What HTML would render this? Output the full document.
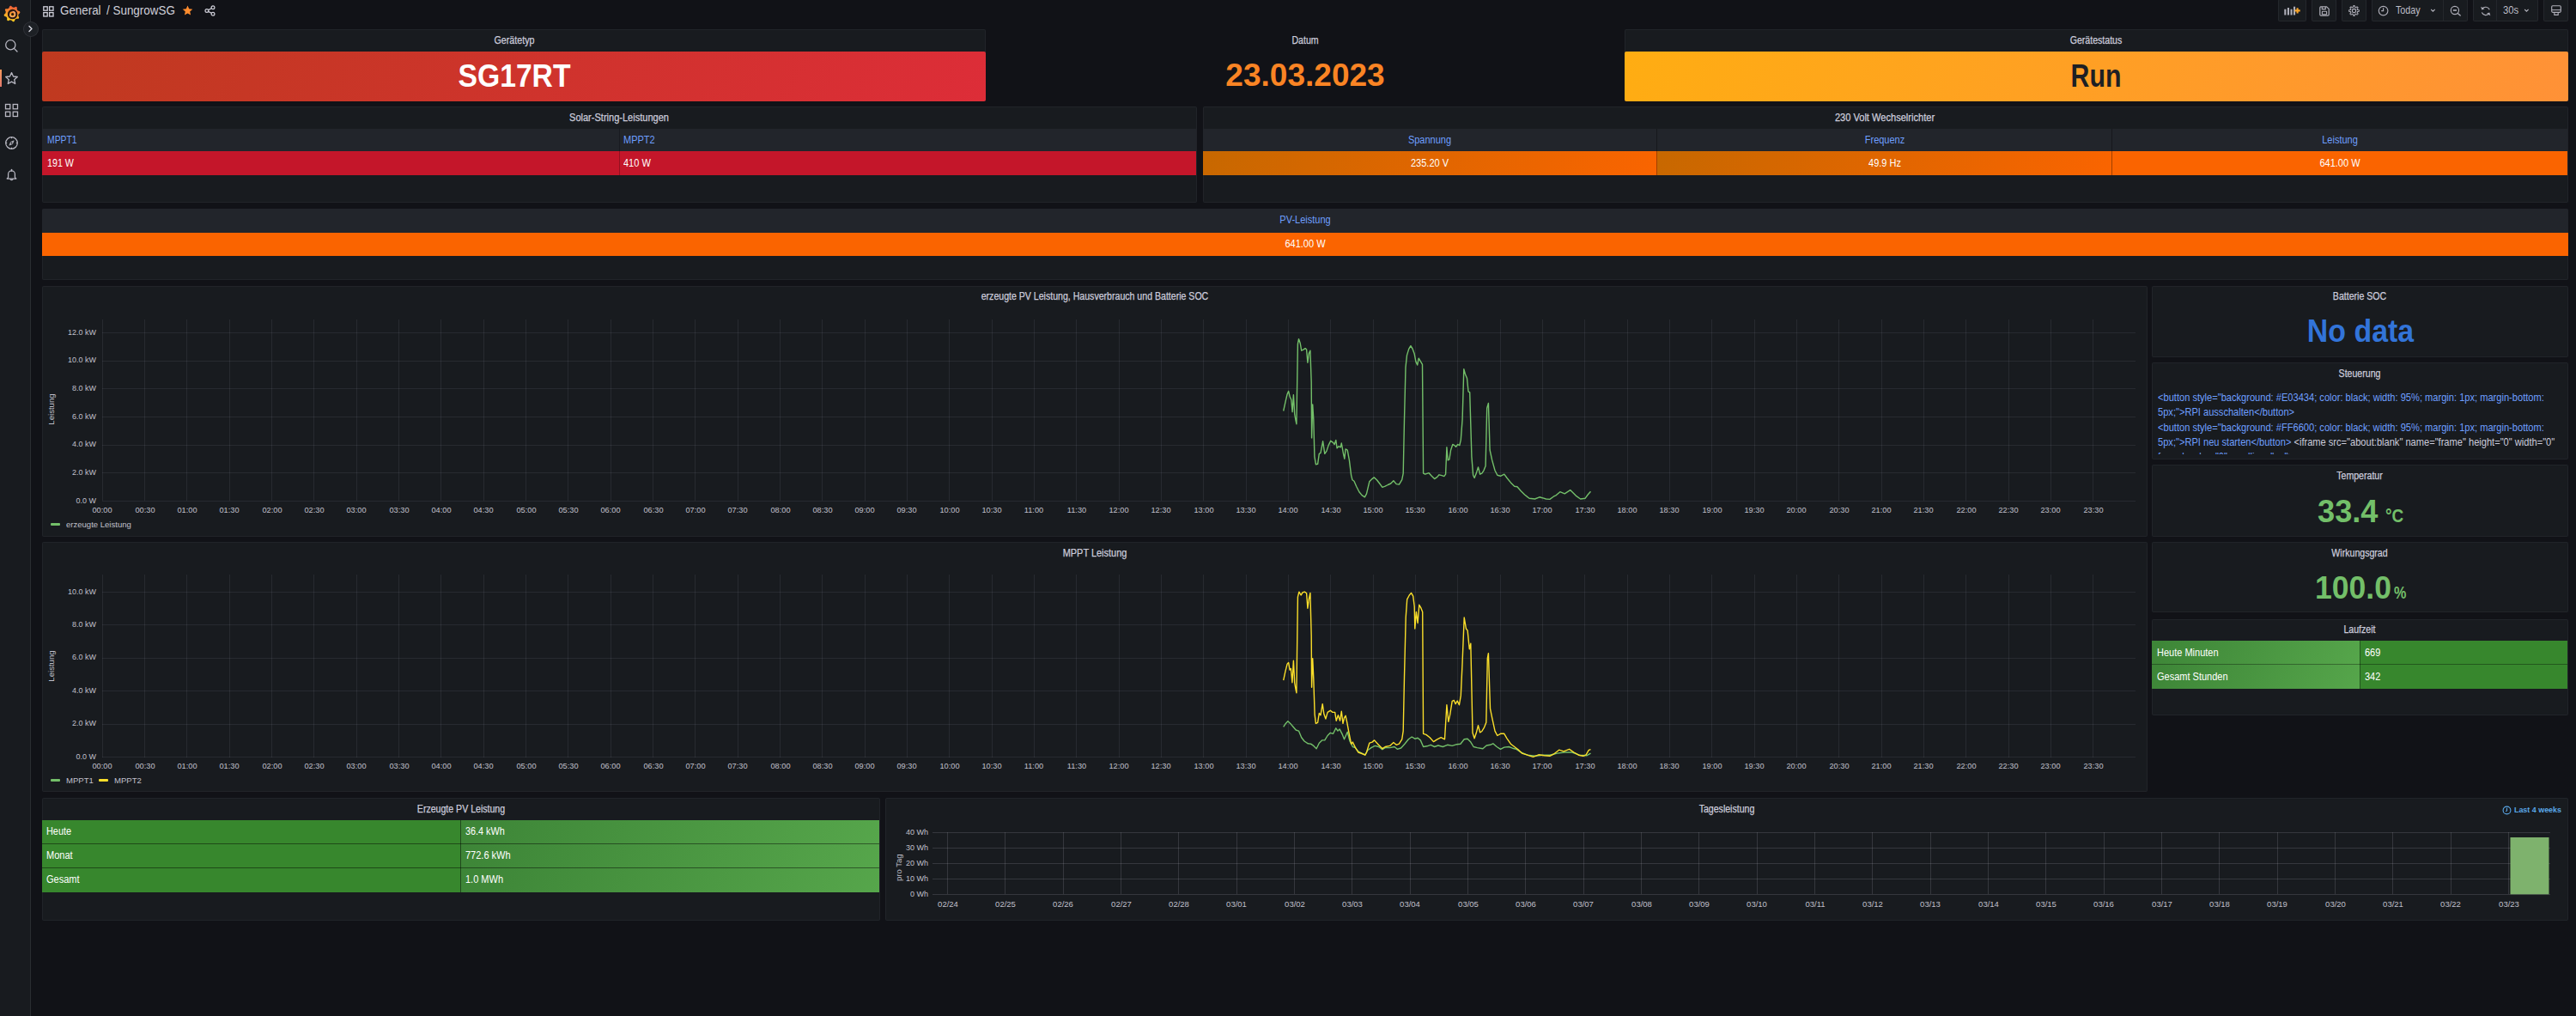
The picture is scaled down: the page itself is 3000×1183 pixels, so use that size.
<!DOCTYPE html><html><head><meta charset="utf-8"><style>
*{margin:0;padding:0;}
html,body{width:3000px;height:1183px;overflow:hidden;background:#111217;font-family:"Liberation Sans", sans-serif;}
svg{position:absolute;overflow:visible;}
</style></head><body><div style="position:absolute;left:0.00px;top:0.00px;width:35.00px;height:1183.00px;background:#181b1f;border-right:1px solid rgba(204,204,220,0.10);"></div>
<svg style="left:3.5px;top:5.5px" width="20" height="20" viewBox="0 0 20 20">
<defs><linearGradient id="lg" x1="0.3" y1="1" x2="0.5" y2="0"><stop offset="0" stop-color="#fcd21f"/><stop offset="0.45" stop-color="#f9a52a"/><stop offset="1" stop-color="#f05a3a"/></linearGradient></defs>
<path fill="url(#lg)" d="M18.26 10.00 L17.63 10.50 L17.49 10.99 L17.40 11.47 L17.29 11.95 L17.30 12.48 L17.70 13.19 L18.03 13.96 L18.14 14.70 L17.94 15.31 L17.43 15.70 L16.69 15.86 L15.84 15.84 L15.04 15.75 L14.60 15.99 L14.19 16.28 L13.78 16.54 L13.41 16.91 L13.19 17.70 L12.88 18.48 L12.43 19.08 L11.86 19.37 L11.22 19.28 L10.58 18.87 L10.00 18.26 L9.50 17.63 L9.01 17.49 L8.53 17.40 L8.05 17.29 L7.52 17.30 L6.81 17.70 L6.04 18.03 L5.30 18.14 L4.69 17.94 L4.30 17.43 L4.14 16.69 L4.16 15.84 L4.25 15.04 L4.01 14.60 L3.72 14.19 L3.46 13.78 L3.09 13.41 L2.30 13.19 L1.52 12.88 L0.92 12.43 L0.63 11.86 L0.72 11.22 L1.13 10.58 L1.74 10.00 L2.37 9.50 L2.51 9.01 L2.60 8.53 L2.71 8.05 L2.70 7.52 L2.30 6.81 L1.97 6.04 L1.86 5.30 L2.06 4.69 L2.57 4.30 L3.31 4.14 L4.16 4.16 L4.96 4.25 L5.40 4.01 L5.81 3.72 L6.22 3.46 L6.59 3.09 L6.81 2.30 L7.12 1.52 L7.57 0.92 L8.14 0.63 L8.78 0.72 L9.42 1.13 L10.00 1.74 L10.50 2.37 L10.99 2.51 L11.47 2.60 L11.95 2.71 L12.48 2.70 L13.19 2.30 L13.96 1.97 L14.70 1.86 L15.31 2.06 L15.70 2.57 L15.86 3.31 L15.84 4.16 L15.75 4.96 L15.99 5.40 L16.28 5.81 L16.54 6.22 L16.91 6.59 L17.70 6.81 L18.48 7.12 L19.08 7.57 L19.37 8.14 L19.28 8.78 L18.87 9.42Z"/>
<circle cx="10.6" cy="10.6" r="4.6" fill="none" stroke="#2a1710" stroke-width="2.3"/>
<path d="M10.6 7.4 A3.2 3.2 0 1 1 7.4 10.8" fill="none" stroke="#e8a27a" stroke-width="1.1"/>
<circle cx="10.6" cy="10.6" r="1.6" fill="#2a1710"/>
</svg>
<div style="position:absolute;left:26.5px;top:24.5px;width:18px;height:18px;border-radius:50%;background:#1d2025;border:1px solid rgba(204,204,220,0.10);box-sizing:border-box;"></div>
<svg style="left:31px;top:29px" width="9" height="9" viewBox="0 0 9 9"><path d="M3 1.5 L6 4.5 L3 7.5" fill="none" stroke="#d8d8e0" stroke-width="1.4" stroke-linecap="round" stroke-linejoin="round"/></svg>
<svg style="left:5px;top:45px" width="17" height="17" viewBox="0 0 17 17"><circle cx="7.3" cy="7.3" r="5.6" fill="none" stroke="#b8b8c2" stroke-width="1.3"/><path d="M11.4 11.4 L15 15" stroke="#b8b8c2" stroke-width="1.3" stroke-linecap="round"/></svg>
<svg style="left:5px;top:83px" width="17" height="17" viewBox="0 0 17 17"><path d="M8.5 1.6 L10.5 6 L15.3 6.5 L11.7 9.7 L12.7 14.5 L8.5 12.1 L4.3 14.5 L5.3 9.7 L1.7 6.5 L6.5 6 Z" fill="none" stroke="#b8b8c2" stroke-width="1.3" stroke-linejoin="round"/></svg>
<div style="position:absolute;left:0;top:80.5px;width:1.6px;height:20px;background:linear-gradient(#f79a5c,#e2786c);"></div>
<svg style="left:5px;top:120px" width="17" height="17" viewBox="0 0 17 17"><g fill="none" stroke="#b8b8c2" stroke-width="1.3"><rect x="1.5" y="1.5" width="5.3" height="5.3"/><rect x="10.2" y="1.5" width="5.3" height="5.3"/><rect x="1.5" y="10.2" width="5.3" height="5.3"/><rect x="10.2" y="10.2" width="5.3" height="5.3"/></g></svg>
<svg style="left:5px;top:157.5px" width="17" height="17" viewBox="0 0 17 17"><circle cx="8.5" cy="8.5" r="6.8" fill="none" stroke="#b8b8c2" stroke-width="1.25"/><path d="M8.5 1.7 V3.2 M8.5 13.8 V15.3 M1.7 8.5 H3.2 M13.8 8.5 H15.3" stroke="#b8b8c2" stroke-width="1.1"/><path d="M11.2 5.8 L9.6 9.6 L5.8 11.2 L7.4 7.4 Z" fill="#b8b8c2" stroke="#b8b8c2" stroke-width="0.6" stroke-linejoin="round"/><circle cx="8.5" cy="8.5" r="0.9" fill="#181b1f"/></svg>
<svg style="left:5px;top:195px" width="17" height="17" viewBox="0 0 17 17"><path d="M4.6 11.6 V7.8 A3.9 3.9 0 0 1 12.4 7.8 V11.6 L13.8 13 H3.2 Z" fill="none" stroke="#b8b8c2" stroke-width="1.25" stroke-linejoin="round"/><path d="M7 13.2 A1.5 1.5 0 0 0 10 13.2" fill="none" stroke="#b8b8c2" stroke-width="1.2"/><path d="M8.5 2.3 V3.9" stroke="#b8b8c2" stroke-width="1.25" stroke-linecap="round"/></svg>
<svg style="left:49.5px;top:6.5px" width="13" height="13" viewBox="0 0 13 13"><g fill="none" stroke="#d0d0da" stroke-width="1.3"><rect x="0.8" y="0.8" width="4.4" height="4.4"/><rect x="7.6" y="0.8" width="4.4" height="4.4"/><rect x="0.8" y="7.6" width="4.4" height="4.4"/><rect x="7.6" y="7.6" width="4.4" height="4.4"/></g></svg>
<div style="position:absolute;left:69.70px;top:-1.48px;width:1600px;height:27.6px;line-height:27.6px;text-align:left;font-size:13.8px;color:#d0d0da;font-weight:normal;white-space:nowrap;transform:scaleX(0.9696);transform-origin:left center;">General</div>
<div style="position:absolute;left:124.10px;top:-1.48px;width:1600px;height:27.6px;line-height:27.6px;text-align:left;font-size:13.8px;color:#d0d0da;font-weight:normal;white-space:nowrap;transform:scaleX(0.9735);transform-origin:left center;">/ SungrowSG</div>
<svg style="left:211.5px;top:5.8px" width="13" height="13" viewBox="0 0 13 13"><path d="M6.5 0.6 L8.2 4.3 L12.3 4.7 L9.2 7.4 L10.1 11.5 L6.5 9.4 L2.9 11.5 L3.8 7.4 L0.7 4.7 L4.8 4.3 Z" fill="#ff8c2e"/></svg>
<svg style="left:238px;top:6px" width="13" height="13" viewBox="0 0 13 13"><g fill="none" stroke="#d0d0da" stroke-width="1.2"><circle cx="10" cy="2.8" r="1.9"/><circle cx="2.9" cy="6.5" r="1.9"/><circle cx="10" cy="10.2" r="1.9"/><path d="M4.6 5.6 L8.3 3.7 M4.6 7.4 L8.3 9.3"/></g></svg>
<div style="position:absolute;left:2653.00px;top:-1.00px;width:33.00px;height:25.50px;background:#181b1f;border:1px solid rgba(204,204,220,0.07);box-sizing:border-box;border-radius:2px;"></div>
<div style="position:absolute;left:2692.00px;top:-1.00px;width:29.00px;height:25.50px;background:#181b1f;border:1px solid rgba(204,204,220,0.07);box-sizing:border-box;border-radius:2px;"></div>
<div style="position:absolute;left:2727.00px;top:-1.00px;width:28.50px;height:25.50px;background:#181b1f;border:1px solid rgba(204,204,220,0.07);box-sizing:border-box;border-radius:2px;"></div>
<div style="position:absolute;left:2761.50px;top:-1.00px;width:112.00px;height:25.50px;background:#181b1f;border:1px solid rgba(204,204,220,0.07);box-sizing:border-box;border-radius:2px;"></div>
<div style="position:absolute;left:2845.00px;top:0.00px;width:1.00px;height:24.00px;background:rgba(204,204,220,0.07);"></div>
<div style="position:absolute;left:2880.00px;top:-1.00px;width:75.50px;height:25.50px;background:#181b1f;border:1px solid rgba(204,204,220,0.07);box-sizing:border-box;border-radius:2px;"></div>
<div style="position:absolute;left:2907.00px;top:0.00px;width:1.00px;height:24.00px;background:rgba(204,204,220,0.07);"></div>
<div style="position:absolute;left:2962.00px;top:-1.00px;width:28.50px;height:25.50px;background:#181b1f;border:1px solid rgba(204,204,220,0.07);box-sizing:border-box;border-radius:2px;"></div>
<svg style="left:2659px;top:5px" width="22" height="15" viewBox="0 0 22 15"><g fill="#aeaeb8"><rect x="1.3" y="5.7" width="2.1" height="6.8"/><rect x="4.9" y="4" width="2.1" height="8.5"/><rect x="8.5" y="5.7" width="2.1" height="6.8"/><rect x="12" y="2.7" width="2.1" height="9.8"/></g><path d="M16.6 4.3 V10.5 M13.5 7.4 H19.7" stroke="#f7a52b" stroke-width="2.1"/></svg>
<svg style="left:2700.5px;top:6.5px" width="12" height="12" viewBox="0 0 12 12"><path d="M1.5 0.8 H8.6 L11.2 3.4 V10 Q11.2 11.2 10 11.2 H1.9 Q0.8 11.2 0.8 10 V1.9 Q0.8 0.8 1.9 0.8 Z" fill="none" stroke="#aeaeb8" stroke-width="1.2" stroke-linejoin="round"/><path d="M3.3 1 V3.6 H7.3 V1" fill="none" stroke="#aeaeb8" stroke-width="1.1"/><rect x="3.4" y="6.3" width="5.2" height="3.6" rx="0.6" fill="none" stroke="#aeaeb8" stroke-width="1.1"/></svg>
<svg style="left:2734.7px;top:6.1px" width="13" height="13" viewBox="0 0 13 13"><path d="M10.33 8.09 L10.22 8.34 L10.17 8.62 L10.66 9.28 L11.07 10.01 L10.90 10.36 L10.64 10.64 L10.36 10.90 L10.01 11.07 L9.28 10.66 L8.62 10.17 L8.34 10.22 L8.09 10.33 L7.83 10.43 L7.60 10.59 L7.48 11.40 L7.25 12.22 L6.88 12.34 L6.50 12.35 L6.12 12.34 L5.75 12.22 L5.52 11.40 L5.40 10.59 L5.17 10.43 L4.91 10.33 L4.66 10.22 L4.38 10.17 L3.72 10.66 L2.99 11.07 L2.64 10.90 L2.36 10.64 L2.10 10.36 L1.93 10.01 L2.34 9.28 L2.83 8.62 L2.78 8.34 L2.67 8.09 L2.57 7.83 L2.41 7.60 L1.60 7.48 L0.78 7.25 L0.66 6.88 L0.65 6.50 L0.66 6.12 L0.78 5.75 L1.60 5.52 L2.41 5.40 L2.57 5.17 L2.67 4.91 L2.78 4.66 L2.83 4.38 L2.34 3.72 L1.93 2.99 L2.10 2.64 L2.36 2.36 L2.64 2.10 L2.99 1.93 L3.72 2.34 L4.38 2.83 L4.66 2.78 L4.91 2.67 L5.17 2.57 L5.40 2.41 L5.52 1.60 L5.75 0.78 L6.12 0.66 L6.50 0.65 L6.88 0.66 L7.25 0.78 L7.48 1.60 L7.60 2.41 L7.83 2.57 L8.09 2.67 L8.34 2.78 L8.62 2.83 L9.28 2.34 L10.01 1.93 L10.36 2.10 L10.64 2.36 L10.90 2.64 L11.07 2.99 L10.66 3.72 L10.17 4.38 L10.22 4.66 L10.33 4.91 L10.43 5.17 L10.59 5.40 L11.40 5.52 L12.22 5.75 L12.34 6.12 L12.35 6.50 L12.34 6.88 L12.22 7.25 L11.40 7.48 L10.59 7.60 L10.43 7.83Z" fill="none" stroke="#aeaeb8" stroke-width="1.1" stroke-linejoin="round"/><circle cx="6.5" cy="6.5" r="2.1" fill="none" stroke="#aeaeb8" stroke-width="1.1"/></svg>
<svg style="left:2769px;top:6px" width="13" height="13" viewBox="0 0 13 13"><circle cx="6.6" cy="6.6" r="5.3" fill="none" stroke="#aeaeb8" stroke-width="1.15"/><path d="M6.6 3.3 V6.6 H4.2" fill="none" stroke="#aeaeb8" stroke-width="1.15"/></svg>
<div style="position:absolute;left:2790.20px;top:0.37px;width:1600px;height:24.4px;line-height:24.4px;text-align:left;font-size:12.2px;color:#bdbdc7;font-weight:normal;white-space:nowrap;transform:scaleX(0.8819);transform-origin:left center;">Today</div>
<svg style="left:2829.6px;top:10.4px" width="7" height="5" viewBox="0 0 7 5"><path d="M1.2 1 L3.4 3.2 L5.6 1" fill="none" stroke="#aeaeb8" stroke-width="1.1"/></svg>
<svg style="left:2852.5px;top:5.8px" width="14" height="14" viewBox="0 0 14 14"><circle cx="5.9" cy="6" r="4.6" fill="none" stroke="#aeaeb8" stroke-width="1.15"/><path d="M9.3 9.4 L12.2 12.1" stroke="#aeaeb8" stroke-width="1.3" stroke-linecap="round"/><path d="M3.8 6 H8" stroke="#aeaeb8" stroke-width="1.6"/></svg>
<svg style="left:2887.5px;top:6px" width="14" height="14" viewBox="0 0 14 14"><path d="M2.6 4.4 A5 5 0 0 1 11.3 5.2 M11 9.4 A5 5 0 0 1 2.3 8.6" fill="none" stroke="#aeaeb8" stroke-width="1.15"/><path d="M1.2 1.8 L2.4 5.4 L5.6 4.2 Z M12.4 12.2 L11.2 8.6 L8 9.8 Z" fill="#aeaeb8"/></svg>
<div style="position:absolute;left:2914.60px;top:0.37px;width:1600px;height:24.4px;line-height:24.4px;text-align:left;font-size:12.2px;color:#bdbdc7;font-weight:normal;white-space:nowrap;transform:scaleX(0.9251);transform-origin:left center;">30s</div>
<svg style="left:2939.3px;top:10.4px" width="7" height="5" viewBox="0 0 7 5"><path d="M1.2 1 L3.4 3.2 L5.6 1" fill="none" stroke="#aeaeb8" stroke-width="1.1"/></svg>
<svg style="left:2970.6px;top:6.3px" width="13" height="13" viewBox="0 0 13 13"><rect x="0.7" y="0.7" width="10.6" height="7.6" rx="1.2" fill="none" stroke="#aeaeb8" stroke-width="1.15"/><path d="M1 5.6 H11" stroke="#aeaeb8" stroke-width="1"/><path d="M3.8 8.3 V11.4 H8.2 V8.3" fill="none" stroke="#aeaeb8" stroke-width="1.1"/></svg>
<div style="position:absolute;left:49.00px;top:34.00px;width:1099.00px;height:83.50px;background:#181b1f;border:1px solid rgba(204,204,220,0.055);box-sizing:border-box;border-radius:2px;"></div>
<div style="position:absolute;left:-201.50px;top:34.64px;width:1600px;height:24.6px;line-height:24.6px;text-align:center;font-size:12.3px;color:#ccccdc;font-weight:normal;white-space:nowrap;transform:scaleX(0.8681);transform-origin:center center;-webkit-text-stroke:0.25px #ccccdc;">Ger&auml;tetyp</div>
<div style="position:absolute;left:49.00px;top:60.00px;width:1099.00px;height:57.50px;background:linear-gradient(120deg,#bf3a1f,#dd2d38);border-radius:2px;"></div>
<div style="position:absolute;left:-201.45px;top:50.88px;width:1600px;height:74.6px;line-height:74.6px;text-align:center;font-size:37.3px;color:#ffffff;font-weight:bold;white-space:nowrap;transform:scaleX(0.9035);transform-origin:center center;">SG17RT</div>
<div style="position:absolute;left:719.90px;top:34.64px;width:1600px;height:24.6px;line-height:24.6px;text-align:center;font-size:12.3px;color:#ccccdc;font-weight:normal;white-space:nowrap;transform:scaleX(0.8600);transform-origin:center center;-webkit-text-stroke:0.25px #ccccdc;">Datum</div>
<div style="position:absolute;left:719.75px;top:51.86px;width:1600px;height:72.4px;line-height:72.4px;text-align:center;font-size:36.2px;color:#fa8424;font-weight:bold;white-space:nowrap;transform:scaleX(1.0238);transform-origin:center center;">23.03.2023</div>
<div style="position:absolute;left:1891.50px;top:34.00px;width:1099.00px;height:83.50px;background:#181b1f;border:1px solid rgba(204,204,220,0.055);box-sizing:border-box;border-radius:2px;"></div>
<div style="position:absolute;left:1640.70px;top:34.64px;width:1600px;height:24.6px;line-height:24.6px;text-align:center;font-size:12.3px;color:#ccccdc;font-weight:normal;white-space:nowrap;transform:scaleX(0.8600);transform-origin:center center;-webkit-text-stroke:0.25px #ccccdc;">Ger&auml;testatus</div>
<div style="position:absolute;left:1891.50px;top:60.00px;width:1099.00px;height:57.50px;background:linear-gradient(120deg,#ffad12,#ff9137);border-radius:2px;"></div>
<div style="position:absolute;left:1640.95px;top:50.69px;width:1600px;height:74.2px;line-height:74.2px;text-align:center;font-size:37.1px;color:#1d2024;font-weight:bold;white-space:nowrap;transform:scaleX(0.8162);transform-origin:center center;">Run</div>
<div style="position:absolute;left:49.00px;top:124.00px;width:1344.50px;height:112.00px;background:#181b1f;border:1px solid rgba(204,204,220,0.055);box-sizing:border-box;border-radius:2px;"></div>
<div style="position:absolute;left:-78.80px;top:124.64px;width:1600px;height:24.6px;line-height:24.6px;text-align:center;font-size:12.3px;color:#ccccdc;font-weight:normal;white-space:nowrap;transform:scaleX(0.8970);transform-origin:center center;-webkit-text-stroke:0.25px #ccccdc;">Solar-String-Leistungen</div>
<div style="position:absolute;left:49.00px;top:150.00px;width:1343.50px;height:26.00px;background:#22252b;"></div>
<div style="position:absolute;left:49.00px;top:176.00px;width:1343.50px;height:27.50px;background:#c4162a;"></div>
<div style="position:absolute;left:720.50px;top:150.00px;width:1.00px;height:53.50px;background:rgba(0,0,0,0.25);"></div>
<div style="position:absolute;left:54.70px;top:151.04px;width:1600px;height:24.6px;line-height:24.6px;text-align:left;font-size:12.3px;color:#6e9fff;font-weight:normal;white-space:nowrap;transform:scaleX(0.8435);transform-origin:left center;">MPPT1</div>
<div style="position:absolute;left:726.20px;top:151.04px;width:1600px;height:24.6px;line-height:24.6px;text-align:left;font-size:12.3px;color:#6e9fff;font-weight:normal;white-space:nowrap;transform:scaleX(0.8950);transform-origin:left center;">MPPT2</div>
<div style="position:absolute;left:54.70px;top:178.04px;width:1600px;height:24.6px;line-height:24.6px;text-align:left;font-size:12.3px;color:#ffffff;font-weight:normal;white-space:nowrap;transform:scaleX(0.8693);transform-origin:left center;">191 W</div>
<div style="position:absolute;left:726.20px;top:178.04px;width:1600px;height:24.6px;line-height:24.6px;text-align:left;font-size:12.3px;color:#ffffff;font-weight:normal;white-space:nowrap;transform:scaleX(0.8950);transform-origin:left center;">410 W</div>
<div style="position:absolute;left:1400.50px;top:124.00px;width:1590.00px;height:112.00px;background:#181b1f;border:1px solid rgba(204,204,220,0.055);box-sizing:border-box;border-radius:2px;"></div>
<div style="position:absolute;left:1395.20px;top:124.64px;width:1600px;height:24.6px;line-height:24.6px;text-align:center;font-size:12.3px;color:#ccccdc;font-weight:normal;white-space:nowrap;transform:scaleX(0.9008);transform-origin:center center;-webkit-text-stroke:0.25px #ccccdc;">230 Volt Wechselrichter</div>
<div style="position:absolute;left:1400.50px;top:150.00px;width:1589.00px;height:26.00px;background:#22252b;"></div>
<div style="position:absolute;left:1400.50px;top:176.00px;width:529.00px;height:27.50px;background:linear-gradient(120deg,#c76800,#fa6400);"></div>
<div style="position:absolute;left:865.00px;top:151.04px;width:1600px;height:24.6px;line-height:24.6px;text-align:center;font-size:12.3px;color:#6e9fff;font-weight:normal;white-space:nowrap;transform:scaleX(0.8950);transform-origin:center center;">Spannung</div>
<div style="position:absolute;left:865.00px;top:178.04px;width:1600px;height:24.6px;line-height:24.6px;text-align:center;font-size:12.3px;color:#ffffff;font-weight:normal;white-space:nowrap;transform:scaleX(0.8950);transform-origin:center center;">235.20 V</div>
<div style="position:absolute;left:1929.50px;top:176.00px;width:530.00px;height:27.50px;background:linear-gradient(120deg,#c76800,#fa6400);"></div>
<div style="position:absolute;left:1394.50px;top:151.04px;width:1600px;height:24.6px;line-height:24.6px;text-align:center;font-size:12.3px;color:#6e9fff;font-weight:normal;white-space:nowrap;transform:scaleX(0.8950);transform-origin:center center;">Frequenz</div>
<div style="position:absolute;left:1394.50px;top:178.04px;width:1600px;height:24.6px;line-height:24.6px;text-align:center;font-size:12.3px;color:#ffffff;font-weight:normal;white-space:nowrap;transform:scaleX(0.8950);transform-origin:center center;">49.9 Hz</div>
<div style="position:absolute;left:2459.50px;top:176.00px;width:530.00px;height:27.50px;background:#fa6400;"></div>
<div style="position:absolute;left:1924.50px;top:151.04px;width:1600px;height:24.6px;line-height:24.6px;text-align:center;font-size:12.3px;color:#6e9fff;font-weight:normal;white-space:nowrap;transform:scaleX(0.8950);transform-origin:center center;">Leistung</div>
<div style="position:absolute;left:1924.50px;top:178.04px;width:1600px;height:24.6px;line-height:24.6px;text-align:center;font-size:12.3px;color:#ffffff;font-weight:normal;white-space:nowrap;transform:scaleX(0.8950);transform-origin:center center;">641.00 W</div>
<div style="position:absolute;left:1929.00px;top:150.00px;width:1.00px;height:53.50px;background:rgba(0,0,0,0.35);"></div>
<div style="position:absolute;left:2459.00px;top:150.00px;width:1.00px;height:53.50px;background:rgba(0,0,0,0.35);"></div>
<div style="position:absolute;left:49.00px;top:243.00px;width:2941.50px;height:83.00px;background:#181b1f;border:1px solid rgba(204,204,220,0.055);box-sizing:border-box;border-radius:2px;"></div>
<div style="position:absolute;left:49.00px;top:243.00px;width:2941.50px;height:27.50px;background:#22252b;border-radius:2px 2px 0 0;"></div>
<div style="position:absolute;left:49.00px;top:270.50px;width:2941.50px;height:27.50px;background:#fa6400;"></div>
<div style="position:absolute;left:719.50px;top:244.04px;width:1600px;height:24.6px;line-height:24.6px;text-align:center;font-size:12.3px;color:#6e9fff;font-weight:normal;white-space:nowrap;transform:scaleX(0.8950);transform-origin:center center;">PV-Leistung</div>
<div style="position:absolute;left:719.50px;top:272.34px;width:1600px;height:24.6px;line-height:24.6px;text-align:center;font-size:12.3px;color:#ffffff;font-weight:normal;white-space:nowrap;transform:scaleX(0.8950);transform-origin:center center;">641.00 W</div>
<div style="position:absolute;left:49.00px;top:332.50px;width:2451.50px;height:292.50px;background:#181b1f;border:1px solid rgba(204,204,220,0.055);box-sizing:border-box;border-radius:2px;"></div><div style="position:absolute;left:474.50px;top:333.14px;width:1600px;height:24.6px;line-height:24.6px;text-align:center;font-size:12.3px;color:#ccccdc;font-weight:normal;white-space:nowrap;transform:scaleX(0.8600);transform-origin:center center;-webkit-text-stroke:0.25px #ccccdc;">erzeugte PV Leistung, Hausverbrauch und Batterie SOC</div><svg style="left:0;top:0" width="3000" height="1183" viewBox="0 0 3000 1183"><g stroke="rgba(204,204,220,0.09)" stroke-width="1" shape-rendering="crispEdges"><line x1="119.25" y1="372" x2="119.25" y2="583.4"/><line x1="168.58" y1="372" x2="168.58" y2="583.4"/><line x1="217.91" y1="372" x2="217.91" y2="583.4"/><line x1="267.23" y1="372" x2="267.23" y2="583.4"/><line x1="316.56" y1="372" x2="316.56" y2="583.4"/><line x1="365.89" y1="372" x2="365.89" y2="583.4"/><line x1="415.22" y1="372" x2="415.22" y2="583.4"/><line x1="464.55" y1="372" x2="464.55" y2="583.4"/><line x1="513.88" y1="372" x2="513.88" y2="583.4"/><line x1="563.20" y1="372" x2="563.20" y2="583.4"/><line x1="612.53" y1="372" x2="612.53" y2="583.4"/><line x1="661.86" y1="372" x2="661.86" y2="583.4"/><line x1="711.19" y1="372" x2="711.19" y2="583.4"/><line x1="760.52" y1="372" x2="760.52" y2="583.4"/><line x1="809.84" y1="372" x2="809.84" y2="583.4"/><line x1="859.17" y1="372" x2="859.17" y2="583.4"/><line x1="908.50" y1="372" x2="908.50" y2="583.4"/><line x1="957.83" y1="372" x2="957.83" y2="583.4"/><line x1="1007.16" y1="372" x2="1007.16" y2="583.4"/><line x1="1056.48" y1="372" x2="1056.48" y2="583.4"/><line x1="1105.81" y1="372" x2="1105.81" y2="583.4"/><line x1="1155.14" y1="372" x2="1155.14" y2="583.4"/><line x1="1204.47" y1="372" x2="1204.47" y2="583.4"/><line x1="1253.80" y1="372" x2="1253.80" y2="583.4"/><line x1="1303.12" y1="372" x2="1303.12" y2="583.4"/><line x1="1352.45" y1="372" x2="1352.45" y2="583.4"/><line x1="1401.78" y1="372" x2="1401.78" y2="583.4"/><line x1="1451.11" y1="372" x2="1451.11" y2="583.4"/><line x1="1500.44" y1="372" x2="1500.44" y2="583.4"/><line x1="1549.77" y1="372" x2="1549.77" y2="583.4"/><line x1="1599.09" y1="372" x2="1599.09" y2="583.4"/><line x1="1648.42" y1="372" x2="1648.42" y2="583.4"/><line x1="1697.75" y1="372" x2="1697.75" y2="583.4"/><line x1="1747.08" y1="372" x2="1747.08" y2="583.4"/><line x1="1796.41" y1="372" x2="1796.41" y2="583.4"/><line x1="1845.73" y1="372" x2="1845.73" y2="583.4"/><line x1="1895.06" y1="372" x2="1895.06" y2="583.4"/><line x1="1944.39" y1="372" x2="1944.39" y2="583.4"/><line x1="1993.72" y1="372" x2="1993.72" y2="583.4"/><line x1="2043.05" y1="372" x2="2043.05" y2="583.4"/><line x1="2092.38" y1="372" x2="2092.38" y2="583.4"/><line x1="2141.70" y1="372" x2="2141.70" y2="583.4"/><line x1="2191.03" y1="372" x2="2191.03" y2="583.4"/><line x1="2240.36" y1="372" x2="2240.36" y2="583.4"/><line x1="2289.69" y1="372" x2="2289.69" y2="583.4"/><line x1="2339.02" y1="372" x2="2339.02" y2="583.4"/><line x1="2388.34" y1="372" x2="2388.34" y2="583.4"/><line x1="2437.67" y1="372" x2="2437.67" y2="583.4"/><line x1="119.25" y1="583.40" x2="2487" y2="583.40"/><line x1="119.25" y1="550.75" x2="2487" y2="550.75"/><line x1="119.25" y1="518.10" x2="2487" y2="518.10"/><line x1="119.25" y1="485.45" x2="2487" y2="485.45"/><line x1="119.25" y1="452.80" x2="2487" y2="452.80"/><line x1="119.25" y1="420.15" x2="2487" y2="420.15"/><line x1="119.25" y1="387.50" x2="2487" y2="387.50"/></g><path d="M1494.7 478.5 L1497.3 466.6 L1499.1 459.0 L1500.6 455.4 L1502.3 462.3 L1503.8 465.5 L1505.1 479.6 L1506.4 459.7 L1507.7 481.8 L1508.8 488.3 L1509.9 493.7 L1511.4 400.6 L1512.5 394.7 L1514.2 399.5 L1515.7 408.2 L1517.9 407.1 L1520.1 405.6 L1521.6 407.1 L1522.9 422.2 L1524.4 411.4 L1525.9 408.2 L1527.2 445.0 L1527.6 509.9 L1528.7 471.0 L1529.8 488.3 L1530.9 531.6 L1532.4 540.7 L1534.6 540.3 L1536.3 528.3 L1538.0 527.3 L1540.6 513.8 L1542.8 528.3 L1545.0 525.1 L1547.1 518.6 L1549.7 513.2 L1552.6 515.4 L1554.1 517.5 L1555.8 512.5 L1557.1 521.9 L1559.0 519.7 L1561.2 520.8 L1562.3 516.0 L1564.5 528.3 L1565.8 534.2 L1567.1 522.9 L1569.2 524.0 L1571.4 535.9 L1573.6 553.3 L1574.9 558.7 L1577.0 560.2 L1579.6 566.2 L1582.9 572.7 L1586.1 576.6 L1589.4 578.8 L1591.5 574.9 L1594.8 560.8 L1598.0 557.6 L1600.2 555.9 L1603.4 558.7 L1606.7 563.0 L1609.9 567.3 L1613.2 566.2 L1616.4 564.5 L1619.7 563.0 L1622.9 559.8 L1626.2 563.6 L1629.4 564.1 L1632.7 558.7 L1634.2 551.1 L1635.5 488.3 L1637.0 427.6 L1638.5 413.6 L1640.7 406.4 L1642.9 402.7 L1645.0 406.0 L1647.2 412.1 L1648.9 421.1 L1650.7 425.0 L1652.2 417.2 L1654.3 420.7 L1656.5 424.4 L1657.6 551.1 L1659.8 552.2 L1664.1 550.7 L1667.3 554.3 L1670.6 557.6 L1673.8 555.4 L1676.0 552.8 L1679.2 553.7 L1681.8 554.6 L1683.6 552.2 L1684.9 520.8 L1686.2 535.9 L1687.9 534.8 L1689.6 524.0 L1691.8 517.5 L1694.0 518.6 L1695.5 520.3 L1697.7 517.5 L1699.8 518.6 L1701.3 512.1 L1703.1 488.3 L1704.8 429.8 L1706.3 435.2 L1708.5 440.6 L1710.0 455.8 L1711.7 456.9 L1713.9 531.6 L1715.6 553.3 L1717.1 556.5 L1719.3 551.1 L1721.5 543.9 L1723.6 552.2 L1725.8 551.1 L1728.0 547.8 L1730.1 542.4 L1731.7 475.3 L1733.4 469.4 L1735.1 524.0 L1737.7 535.9 L1741.0 547.8 L1743.8 553.3 L1747.5 554.3 L1751.8 552.2 L1755.0 556.5 L1759.4 561.9 L1763.7 566.2 L1767.0 566.7 L1771.3 571.7 L1775.6 576.0 L1781.0 580.3 L1787.5 581.0 L1792.9 578.8 L1796.2 579.7 L1800.5 581.0 L1804.9 581.4 L1809.2 578.2 L1812.4 576.6 L1816.8 572.7 L1822.2 574.9 L1828.7 570.6 L1835.2 577.1 L1840.6 581.0 L1846.0 580.3 L1849.2 576.0 L1852.5 572.3" fill="none" stroke="#73bf69" stroke-width="1.4" stroke-linejoin="round"/></svg><div style="position:absolute;left:-1488.25px;top:572.51px;width:1600px;height:19.0px;line-height:19.0px;text-align:right;font-size:9.5px;color:#c0c0cc;font-weight:normal;white-space:nowrap;transform:scaleX(0.9443);transform-origin:right center;">0.0 W</div><div style="position:absolute;left:-1488.25px;top:539.86px;width:1600px;height:19.0px;line-height:19.0px;text-align:right;font-size:9.5px;color:#c0c0cc;font-weight:normal;white-space:nowrap;transform:scaleX(0.9443);transform-origin:right center;">2.0 kW</div><div style="position:absolute;left:-1488.25px;top:507.21px;width:1600px;height:19.0px;line-height:19.0px;text-align:right;font-size:9.5px;color:#c0c0cc;font-weight:normal;white-space:nowrap;transform:scaleX(0.9443);transform-origin:right center;">4.0 kW</div><div style="position:absolute;left:-1488.25px;top:474.56px;width:1600px;height:19.0px;line-height:19.0px;text-align:right;font-size:9.5px;color:#c0c0cc;font-weight:normal;white-space:nowrap;transform:scaleX(0.9443);transform-origin:right center;">6.0 kW</div><div style="position:absolute;left:-1488.25px;top:441.91px;width:1600px;height:19.0px;line-height:19.0px;text-align:right;font-size:9.5px;color:#c0c0cc;font-weight:normal;white-space:nowrap;transform:scaleX(0.9443);transform-origin:right center;">8.0 kW</div><div style="position:absolute;left:-1488.25px;top:409.26px;width:1600px;height:19.0px;line-height:19.0px;text-align:right;font-size:9.5px;color:#c0c0cc;font-weight:normal;white-space:nowrap;transform:scaleX(0.9443);transform-origin:right center;">10.0 kW</div><div style="position:absolute;left:-1488.25px;top:376.61px;width:1600px;height:19.0px;line-height:19.0px;text-align:right;font-size:9.5px;color:#c0c0cc;font-weight:normal;white-space:nowrap;transform:scaleX(0.9443);transform-origin:right center;">12.0 kW</div><div style="position:absolute;left:-680.75px;top:584.11px;width:1600px;height:19.0px;line-height:19.0px;text-align:center;font-size:9.5px;color:#c0c0cc;font-weight:normal;white-space:nowrap;transform:scaleX(0.9675);transform-origin:center center;">00:00</div><div style="position:absolute;left:-631.42px;top:584.11px;width:1600px;height:19.0px;line-height:19.0px;text-align:center;font-size:9.5px;color:#c0c0cc;font-weight:normal;white-space:nowrap;transform:scaleX(0.9675);transform-origin:center center;">00:30</div><div style="position:absolute;left:-582.09px;top:584.11px;width:1600px;height:19.0px;line-height:19.0px;text-align:center;font-size:9.5px;color:#c0c0cc;font-weight:normal;white-space:nowrap;transform:scaleX(0.9675);transform-origin:center center;">01:00</div><div style="position:absolute;left:-532.77px;top:584.11px;width:1600px;height:19.0px;line-height:19.0px;text-align:center;font-size:9.5px;color:#c0c0cc;font-weight:normal;white-space:nowrap;transform:scaleX(0.9675);transform-origin:center center;">01:30</div><div style="position:absolute;left:-483.44px;top:584.11px;width:1600px;height:19.0px;line-height:19.0px;text-align:center;font-size:9.5px;color:#c0c0cc;font-weight:normal;white-space:nowrap;transform:scaleX(0.9675);transform-origin:center center;">02:00</div><div style="position:absolute;left:-434.11px;top:584.11px;width:1600px;height:19.0px;line-height:19.0px;text-align:center;font-size:9.5px;color:#c0c0cc;font-weight:normal;white-space:nowrap;transform:scaleX(0.9675);transform-origin:center center;">02:30</div><div style="position:absolute;left:-384.78px;top:584.11px;width:1600px;height:19.0px;line-height:19.0px;text-align:center;font-size:9.5px;color:#c0c0cc;font-weight:normal;white-space:nowrap;transform:scaleX(0.9675);transform-origin:center center;">03:00</div><div style="position:absolute;left:-335.45px;top:584.11px;width:1600px;height:19.0px;line-height:19.0px;text-align:center;font-size:9.5px;color:#c0c0cc;font-weight:normal;white-space:nowrap;transform:scaleX(0.9675);transform-origin:center center;">03:30</div><div style="position:absolute;left:-286.12px;top:584.11px;width:1600px;height:19.0px;line-height:19.0px;text-align:center;font-size:9.5px;color:#c0c0cc;font-weight:normal;white-space:nowrap;transform:scaleX(0.9675);transform-origin:center center;">04:00</div><div style="position:absolute;left:-236.80px;top:584.11px;width:1600px;height:19.0px;line-height:19.0px;text-align:center;font-size:9.5px;color:#c0c0cc;font-weight:normal;white-space:nowrap;transform:scaleX(0.9675);transform-origin:center center;">04:30</div><div style="position:absolute;left:-187.47px;top:584.11px;width:1600px;height:19.0px;line-height:19.0px;text-align:center;font-size:9.5px;color:#c0c0cc;font-weight:normal;white-space:nowrap;transform:scaleX(0.9675);transform-origin:center center;">05:00</div><div style="position:absolute;left:-138.14px;top:584.11px;width:1600px;height:19.0px;line-height:19.0px;text-align:center;font-size:9.5px;color:#c0c0cc;font-weight:normal;white-space:nowrap;transform:scaleX(0.9675);transform-origin:center center;">05:30</div><div style="position:absolute;left:-88.81px;top:584.11px;width:1600px;height:19.0px;line-height:19.0px;text-align:center;font-size:9.5px;color:#c0c0cc;font-weight:normal;white-space:nowrap;transform:scaleX(0.9675);transform-origin:center center;">06:00</div><div style="position:absolute;left:-39.48px;top:584.11px;width:1600px;height:19.0px;line-height:19.0px;text-align:center;font-size:9.5px;color:#c0c0cc;font-weight:normal;white-space:nowrap;transform:scaleX(0.9675);transform-origin:center center;">06:30</div><div style="position:absolute;left:9.84px;top:584.11px;width:1600px;height:19.0px;line-height:19.0px;text-align:center;font-size:9.5px;color:#c0c0cc;font-weight:normal;white-space:nowrap;transform:scaleX(0.9675);transform-origin:center center;">07:00</div><div style="position:absolute;left:59.17px;top:584.11px;width:1600px;height:19.0px;line-height:19.0px;text-align:center;font-size:9.5px;color:#c0c0cc;font-weight:normal;white-space:nowrap;transform:scaleX(0.9675);transform-origin:center center;">07:30</div><div style="position:absolute;left:108.50px;top:584.11px;width:1600px;height:19.0px;line-height:19.0px;text-align:center;font-size:9.5px;color:#c0c0cc;font-weight:normal;white-space:nowrap;transform:scaleX(0.9675);transform-origin:center center;">08:00</div><div style="position:absolute;left:157.83px;top:584.11px;width:1600px;height:19.0px;line-height:19.0px;text-align:center;font-size:9.5px;color:#c0c0cc;font-weight:normal;white-space:nowrap;transform:scaleX(0.9675);transform-origin:center center;">08:30</div><div style="position:absolute;left:207.16px;top:584.11px;width:1600px;height:19.0px;line-height:19.0px;text-align:center;font-size:9.5px;color:#c0c0cc;font-weight:normal;white-space:nowrap;transform:scaleX(0.9675);transform-origin:center center;">09:00</div><div style="position:absolute;left:256.48px;top:584.11px;width:1600px;height:19.0px;line-height:19.0px;text-align:center;font-size:9.5px;color:#c0c0cc;font-weight:normal;white-space:nowrap;transform:scaleX(0.9675);transform-origin:center center;">09:30</div><div style="position:absolute;left:305.81px;top:584.11px;width:1600px;height:19.0px;line-height:19.0px;text-align:center;font-size:9.5px;color:#c0c0cc;font-weight:normal;white-space:nowrap;transform:scaleX(0.9675);transform-origin:center center;">10:00</div><div style="position:absolute;left:355.14px;top:584.11px;width:1600px;height:19.0px;line-height:19.0px;text-align:center;font-size:9.5px;color:#c0c0cc;font-weight:normal;white-space:nowrap;transform:scaleX(0.9675);transform-origin:center center;">10:30</div><div style="position:absolute;left:404.47px;top:584.11px;width:1600px;height:19.0px;line-height:19.0px;text-align:center;font-size:9.5px;color:#c0c0cc;font-weight:normal;white-space:nowrap;transform:scaleX(0.9675);transform-origin:center center;">11:00</div><div style="position:absolute;left:453.80px;top:584.11px;width:1600px;height:19.0px;line-height:19.0px;text-align:center;font-size:9.5px;color:#c0c0cc;font-weight:normal;white-space:nowrap;transform:scaleX(0.9675);transform-origin:center center;">11:30</div><div style="position:absolute;left:503.12px;top:584.11px;width:1600px;height:19.0px;line-height:19.0px;text-align:center;font-size:9.5px;color:#c0c0cc;font-weight:normal;white-space:nowrap;transform:scaleX(0.9675);transform-origin:center center;">12:00</div><div style="position:absolute;left:552.45px;top:584.11px;width:1600px;height:19.0px;line-height:19.0px;text-align:center;font-size:9.5px;color:#c0c0cc;font-weight:normal;white-space:nowrap;transform:scaleX(0.9675);transform-origin:center center;">12:30</div><div style="position:absolute;left:601.78px;top:584.11px;width:1600px;height:19.0px;line-height:19.0px;text-align:center;font-size:9.5px;color:#c0c0cc;font-weight:normal;white-space:nowrap;transform:scaleX(0.9675);transform-origin:center center;">13:00</div><div style="position:absolute;left:651.11px;top:584.11px;width:1600px;height:19.0px;line-height:19.0px;text-align:center;font-size:9.5px;color:#c0c0cc;font-weight:normal;white-space:nowrap;transform:scaleX(0.9675);transform-origin:center center;">13:30</div><div style="position:absolute;left:700.44px;top:584.11px;width:1600px;height:19.0px;line-height:19.0px;text-align:center;font-size:9.5px;color:#c0c0cc;font-weight:normal;white-space:nowrap;transform:scaleX(0.9675);transform-origin:center center;">14:00</div><div style="position:absolute;left:749.77px;top:584.11px;width:1600px;height:19.0px;line-height:19.0px;text-align:center;font-size:9.5px;color:#c0c0cc;font-weight:normal;white-space:nowrap;transform:scaleX(0.9675);transform-origin:center center;">14:30</div><div style="position:absolute;left:799.09px;top:584.11px;width:1600px;height:19.0px;line-height:19.0px;text-align:center;font-size:9.5px;color:#c0c0cc;font-weight:normal;white-space:nowrap;transform:scaleX(0.9675);transform-origin:center center;">15:00</div><div style="position:absolute;left:848.42px;top:584.11px;width:1600px;height:19.0px;line-height:19.0px;text-align:center;font-size:9.5px;color:#c0c0cc;font-weight:normal;white-space:nowrap;transform:scaleX(0.9675);transform-origin:center center;">15:30</div><div style="position:absolute;left:897.75px;top:584.11px;width:1600px;height:19.0px;line-height:19.0px;text-align:center;font-size:9.5px;color:#c0c0cc;font-weight:normal;white-space:nowrap;transform:scaleX(0.9675);transform-origin:center center;">16:00</div><div style="position:absolute;left:947.08px;top:584.11px;width:1600px;height:19.0px;line-height:19.0px;text-align:center;font-size:9.5px;color:#c0c0cc;font-weight:normal;white-space:nowrap;transform:scaleX(0.9675);transform-origin:center center;">16:30</div><div style="position:absolute;left:996.41px;top:584.11px;width:1600px;height:19.0px;line-height:19.0px;text-align:center;font-size:9.5px;color:#c0c0cc;font-weight:normal;white-space:nowrap;transform:scaleX(0.9675);transform-origin:center center;">17:00</div><div style="position:absolute;left:1045.73px;top:584.11px;width:1600px;height:19.0px;line-height:19.0px;text-align:center;font-size:9.5px;color:#c0c0cc;font-weight:normal;white-space:nowrap;transform:scaleX(0.9675);transform-origin:center center;">17:30</div><div style="position:absolute;left:1095.06px;top:584.11px;width:1600px;height:19.0px;line-height:19.0px;text-align:center;font-size:9.5px;color:#c0c0cc;font-weight:normal;white-space:nowrap;transform:scaleX(0.9675);transform-origin:center center;">18:00</div><div style="position:absolute;left:1144.39px;top:584.11px;width:1600px;height:19.0px;line-height:19.0px;text-align:center;font-size:9.5px;color:#c0c0cc;font-weight:normal;white-space:nowrap;transform:scaleX(0.9675);transform-origin:center center;">18:30</div><div style="position:absolute;left:1193.72px;top:584.11px;width:1600px;height:19.0px;line-height:19.0px;text-align:center;font-size:9.5px;color:#c0c0cc;font-weight:normal;white-space:nowrap;transform:scaleX(0.9675);transform-origin:center center;">19:00</div><div style="position:absolute;left:1243.05px;top:584.11px;width:1600px;height:19.0px;line-height:19.0px;text-align:center;font-size:9.5px;color:#c0c0cc;font-weight:normal;white-space:nowrap;transform:scaleX(0.9675);transform-origin:center center;">19:30</div><div style="position:absolute;left:1292.38px;top:584.11px;width:1600px;height:19.0px;line-height:19.0px;text-align:center;font-size:9.5px;color:#c0c0cc;font-weight:normal;white-space:nowrap;transform:scaleX(0.9675);transform-origin:center center;">20:00</div><div style="position:absolute;left:1341.70px;top:584.11px;width:1600px;height:19.0px;line-height:19.0px;text-align:center;font-size:9.5px;color:#c0c0cc;font-weight:normal;white-space:nowrap;transform:scaleX(0.9675);transform-origin:center center;">20:30</div><div style="position:absolute;left:1391.03px;top:584.11px;width:1600px;height:19.0px;line-height:19.0px;text-align:center;font-size:9.5px;color:#c0c0cc;font-weight:normal;white-space:nowrap;transform:scaleX(0.9675);transform-origin:center center;">21:00</div><div style="position:absolute;left:1440.36px;top:584.11px;width:1600px;height:19.0px;line-height:19.0px;text-align:center;font-size:9.5px;color:#c0c0cc;font-weight:normal;white-space:nowrap;transform:scaleX(0.9675);transform-origin:center center;">21:30</div><div style="position:absolute;left:1489.69px;top:584.11px;width:1600px;height:19.0px;line-height:19.0px;text-align:center;font-size:9.5px;color:#c0c0cc;font-weight:normal;white-space:nowrap;transform:scaleX(0.9675);transform-origin:center center;">22:00</div><div style="position:absolute;left:1539.02px;top:584.11px;width:1600px;height:19.0px;line-height:19.0px;text-align:center;font-size:9.5px;color:#c0c0cc;font-weight:normal;white-space:nowrap;transform:scaleX(0.9675);transform-origin:center center;">22:30</div><div style="position:absolute;left:1588.34px;top:584.11px;width:1600px;height:19.0px;line-height:19.0px;text-align:center;font-size:9.5px;color:#c0c0cc;font-weight:normal;white-space:nowrap;transform:scaleX(0.9675);transform-origin:center center;">23:00</div><div style="position:absolute;left:1637.67px;top:584.11px;width:1600px;height:19.0px;line-height:19.0px;text-align:center;font-size:9.5px;color:#c0c0cc;font-weight:normal;white-space:nowrap;transform:scaleX(0.9675);transform-origin:center center;">23:30</div><div style="position:absolute;left:-741.10px;top:466.90px;width:1600px;height:19.0px;line-height:19.0px;text-align:center;font-size:9.5px;color:#c0c0cc;font-weight:normal;white-space:nowrap;transform:rotate(-90deg) scaleX(1.0095);transform-origin:center center;transform-origin:center center;">Leistung</div><div style="position:absolute;left:58.75px;top:609.10px;width:11.30px;height:2.60px;background:#73bf69;border-radius:1px;"></div><div style="position:absolute;left:76.50px;top:600.91px;width:1600px;height:19.0px;line-height:19.0px;text-align:left;font-size:9.5px;color:#c0c0cc;font-weight:normal;white-space:nowrap;transform:scaleX(1.0036);transform-origin:left center;">erzeugte Leistung</div>
<div style="position:absolute;left:49.00px;top:631.00px;width:2451.50px;height:291.25px;background:#181b1f;border:1px solid rgba(204,204,220,0.055);box-sizing:border-box;border-radius:2px;"></div><div style="position:absolute;left:474.50px;top:631.64px;width:1600px;height:24.6px;line-height:24.6px;text-align:center;font-size:12.3px;color:#ccccdc;font-weight:normal;white-space:nowrap;transform:scaleX(0.8908);transform-origin:center center;-webkit-text-stroke:0.25px #ccccdc;">MPPT Leistung</div><svg style="left:0;top:0" width="3000" height="1183" viewBox="0 0 3000 1183"><g stroke="rgba(204,204,220,0.09)" stroke-width="1" shape-rendering="crispEdges"><line x1="119.25" y1="668.5" x2="119.25" y2="881.5"/><line x1="168.58" y1="668.5" x2="168.58" y2="881.5"/><line x1="217.91" y1="668.5" x2="217.91" y2="881.5"/><line x1="267.23" y1="668.5" x2="267.23" y2="881.5"/><line x1="316.56" y1="668.5" x2="316.56" y2="881.5"/><line x1="365.89" y1="668.5" x2="365.89" y2="881.5"/><line x1="415.22" y1="668.5" x2="415.22" y2="881.5"/><line x1="464.55" y1="668.5" x2="464.55" y2="881.5"/><line x1="513.88" y1="668.5" x2="513.88" y2="881.5"/><line x1="563.20" y1="668.5" x2="563.20" y2="881.5"/><line x1="612.53" y1="668.5" x2="612.53" y2="881.5"/><line x1="661.86" y1="668.5" x2="661.86" y2="881.5"/><line x1="711.19" y1="668.5" x2="711.19" y2="881.5"/><line x1="760.52" y1="668.5" x2="760.52" y2="881.5"/><line x1="809.84" y1="668.5" x2="809.84" y2="881.5"/><line x1="859.17" y1="668.5" x2="859.17" y2="881.5"/><line x1="908.50" y1="668.5" x2="908.50" y2="881.5"/><line x1="957.83" y1="668.5" x2="957.83" y2="881.5"/><line x1="1007.16" y1="668.5" x2="1007.16" y2="881.5"/><line x1="1056.48" y1="668.5" x2="1056.48" y2="881.5"/><line x1="1105.81" y1="668.5" x2="1105.81" y2="881.5"/><line x1="1155.14" y1="668.5" x2="1155.14" y2="881.5"/><line x1="1204.47" y1="668.5" x2="1204.47" y2="881.5"/><line x1="1253.80" y1="668.5" x2="1253.80" y2="881.5"/><line x1="1303.12" y1="668.5" x2="1303.12" y2="881.5"/><line x1="1352.45" y1="668.5" x2="1352.45" y2="881.5"/><line x1="1401.78" y1="668.5" x2="1401.78" y2="881.5"/><line x1="1451.11" y1="668.5" x2="1451.11" y2="881.5"/><line x1="1500.44" y1="668.5" x2="1500.44" y2="881.5"/><line x1="1549.77" y1="668.5" x2="1549.77" y2="881.5"/><line x1="1599.09" y1="668.5" x2="1599.09" y2="881.5"/><line x1="1648.42" y1="668.5" x2="1648.42" y2="881.5"/><line x1="1697.75" y1="668.5" x2="1697.75" y2="881.5"/><line x1="1747.08" y1="668.5" x2="1747.08" y2="881.5"/><line x1="1796.41" y1="668.5" x2="1796.41" y2="881.5"/><line x1="1845.73" y1="668.5" x2="1845.73" y2="881.5"/><line x1="1895.06" y1="668.5" x2="1895.06" y2="881.5"/><line x1="1944.39" y1="668.5" x2="1944.39" y2="881.5"/><line x1="1993.72" y1="668.5" x2="1993.72" y2="881.5"/><line x1="2043.05" y1="668.5" x2="2043.05" y2="881.5"/><line x1="2092.38" y1="668.5" x2="2092.38" y2="881.5"/><line x1="2141.70" y1="668.5" x2="2141.70" y2="881.5"/><line x1="2191.03" y1="668.5" x2="2191.03" y2="881.5"/><line x1="2240.36" y1="668.5" x2="2240.36" y2="881.5"/><line x1="2289.69" y1="668.5" x2="2289.69" y2="881.5"/><line x1="2339.02" y1="668.5" x2="2339.02" y2="881.5"/><line x1="2388.34" y1="668.5" x2="2388.34" y2="881.5"/><line x1="2437.67" y1="668.5" x2="2437.67" y2="881.5"/><line x1="119.25" y1="881.50" x2="2487" y2="881.50"/><line x1="119.25" y1="843.10" x2="2487" y2="843.10"/><line x1="119.25" y1="804.70" x2="2487" y2="804.70"/><line x1="119.25" y1="766.30" x2="2487" y2="766.30"/><line x1="119.25" y1="727.90" x2="2487" y2="727.90"/><line x1="119.25" y1="689.50" x2="2487" y2="689.50"/></g><path d="M1494.7 846.3 L1497.3 842.4 L1499.9 839.8 L1502.7 842.4 L1506.0 846.3 L1509.2 850.0 L1512.5 851.1 L1515.7 858.7 L1519.0 863.0 L1523.3 865.8 L1526.6 866.2 L1529.8 868.4 L1533.1 871.7 L1536.3 865.2 L1539.6 861.9 L1542.8 861.9 L1546.1 856.5 L1549.3 853.3 L1552.6 854.3 L1555.8 847.8 L1558.0 851.1 L1560.1 848.9 L1563.4 855.4 L1565.5 860.8 L1569.2 852.2 L1572.0 863.0 L1575.3 869.5 L1578.5 870.6 L1581.8 874.9 L1586.1 877.1 L1589.8 878.8 L1592.6 873.8 L1596.9 870.6 L1601.3 868.4 L1605.6 869.5 L1609.9 872.7 L1613.2 870.6 L1618.6 870.6 L1624.0 869.5 L1627.3 872.3 L1631.6 871.0 L1635.9 866.2 L1640.3 860.8 L1644.2 858.0 L1647.8 860.2 L1651.1 859.3 L1654.3 861.9 L1657.6 869.5 L1661.9 868.8 L1666.2 867.3 L1670.6 869.5 L1674.9 868.0 L1680.3 869.5 L1685.7 867.3 L1691.2 868.4 L1696.6 866.7 L1700.9 866.2 L1705.2 860.8 L1709.1 860.2 L1712.8 864.1 L1716.1 869.5 L1720.4 870.6 L1726.9 871.7 L1731.2 868.0 L1735.5 867.3 L1738.8 865.8 L1743.1 869.5 L1747.5 872.3 L1751.8 870.1 L1757.2 869.5 L1761.5 871.2 L1765.9 872.3 L1771.3 876.0 L1778.9 879.2 L1787.5 880.3 L1796.2 879.2 L1804.9 879.2 L1813.5 877.1 L1822.2 876.0 L1830.8 876.0 L1839.5 879.2 L1848.2 879.7 L1852.5 877.1" fill="none" stroke="#73bf69" stroke-width="1.4" stroke-linejoin="round"/><path d="M1494.7 792.2 L1496.9 781.8 L1499.1 773.1 L1500.6 771.4 L1502.1 780.1 L1503.4 778.5 L1504.9 794.8 L1506.4 769.2 L1507.7 794.8 L1508.8 801.3 L1509.9 806.7 L1511.4 695.2 L1512.9 689.1 L1515.1 693.0 L1517.2 689.7 L1519.4 689.1 L1521.6 690.8 L1522.9 708.2 L1524.4 697.3 L1525.9 690.4 L1527.2 740.6 L1527.6 800.2 L1528.7 766.6 L1529.8 790.4 L1531.1 831.6 L1532.4 842.4 L1534.6 841.3 L1536.3 830.5 L1538.0 832.7 L1540.2 819.7 L1541.9 831.6 L1543.9 837.0 L1546.1 829.4 L1549.3 827.3 L1551.9 829.4 L1554.7 829.4 L1556.2 839.2 L1558.4 832.7 L1560.6 839.2 L1562.3 828.3 L1564.0 842.4 L1565.5 835.9 L1567.1 833.3 L1568.8 841.3 L1571.0 853.3 L1573.6 866.2 L1575.3 864.1 L1578.5 870.6 L1581.8 876.0 L1586.1 877.5 L1589.8 879.2 L1591.5 876.0 L1594.8 865.2 L1598.0 864.1 L1600.6 861.9 L1604.5 866.2 L1609.9 871.7 L1613.2 869.5 L1618.6 868.4 L1622.9 864.5 L1626.2 867.3 L1629.4 866.2 L1632.7 860.8 L1634.2 851.1 L1635.5 788.3 L1637.2 719.0 L1638.7 697.8 L1641.3 693.0 L1643.5 690.4 L1645.7 694.1 L1647.2 706.0 L1647.8 732.0 L1649.4 712.5 L1651.1 725.5 L1652.8 704.3 L1655.0 708.2 L1656.7 712.5 L1657.6 854.3 L1660.8 855.4 L1665.2 858.7 L1669.5 863.6 L1673.8 860.8 L1678.2 858.7 L1682.5 860.8 L1684.9 820.8 L1686.8 840.3 L1688.6 832.7 L1691.2 816.4 L1693.3 815.4 L1695.1 819.7 L1697.2 816.0 L1699.4 820.8 L1701.3 809.9 L1703.1 771.0 L1705.2 719.0 L1707.4 732.0 L1709.1 734.1 L1711.3 755.8 L1712.8 749.3 L1715.0 853.3 L1717.1 859.8 L1719.3 853.3 L1721.5 844.6 L1723.6 852.8 L1725.8 851.5 L1728.6 846.8 L1730.8 841.3 L1732.3 766.6 L1733.4 760.6 L1735.5 825.1 L1737.7 835.9 L1741.0 851.1 L1743.8 856.5 L1747.5 854.3 L1751.8 854.3 L1755.0 859.8 L1759.4 866.2 L1763.7 869.5 L1768.0 872.7 L1772.4 877.1 L1778.9 879.2 L1785.4 881.4 L1791.9 878.8 L1798.4 879.7 L1804.9 880.3 L1809.2 878.2 L1815.7 873.2 L1821.1 874.9 L1827.6 872.3 L1833.0 876.0 L1838.4 879.2 L1843.8 880.3 L1847.1 878.8 L1850.3 873.4 L1852.5 872.7" fill="none" stroke="#fade2a" stroke-width="1.4" stroke-linejoin="round"/></svg><div style="position:absolute;left:-1488.25px;top:870.61px;width:1600px;height:19.0px;line-height:19.0px;text-align:right;font-size:9.5px;color:#c0c0cc;font-weight:normal;white-space:nowrap;transform:scaleX(0.9443);transform-origin:right center;">0.0 W</div><div style="position:absolute;left:-1488.25px;top:832.21px;width:1600px;height:19.0px;line-height:19.0px;text-align:right;font-size:9.5px;color:#c0c0cc;font-weight:normal;white-space:nowrap;transform:scaleX(0.9443);transform-origin:right center;">2.0 kW</div><div style="position:absolute;left:-1488.25px;top:793.81px;width:1600px;height:19.0px;line-height:19.0px;text-align:right;font-size:9.5px;color:#c0c0cc;font-weight:normal;white-space:nowrap;transform:scaleX(0.9443);transform-origin:right center;">4.0 kW</div><div style="position:absolute;left:-1488.25px;top:755.41px;width:1600px;height:19.0px;line-height:19.0px;text-align:right;font-size:9.5px;color:#c0c0cc;font-weight:normal;white-space:nowrap;transform:scaleX(0.9443);transform-origin:right center;">6.0 kW</div><div style="position:absolute;left:-1488.25px;top:717.01px;width:1600px;height:19.0px;line-height:19.0px;text-align:right;font-size:9.5px;color:#c0c0cc;font-weight:normal;white-space:nowrap;transform:scaleX(0.9443);transform-origin:right center;">8.0 kW</div><div style="position:absolute;left:-1488.25px;top:678.61px;width:1600px;height:19.0px;line-height:19.0px;text-align:right;font-size:9.5px;color:#c0c0cc;font-weight:normal;white-space:nowrap;transform:scaleX(0.9443);transform-origin:right center;">10.0 kW</div><div style="position:absolute;left:-680.75px;top:882.21px;width:1600px;height:19.0px;line-height:19.0px;text-align:center;font-size:9.5px;color:#c0c0cc;font-weight:normal;white-space:nowrap;transform:scaleX(0.9675);transform-origin:center center;">00:00</div><div style="position:absolute;left:-631.42px;top:882.21px;width:1600px;height:19.0px;line-height:19.0px;text-align:center;font-size:9.5px;color:#c0c0cc;font-weight:normal;white-space:nowrap;transform:scaleX(0.9675);transform-origin:center center;">00:30</div><div style="position:absolute;left:-582.09px;top:882.21px;width:1600px;height:19.0px;line-height:19.0px;text-align:center;font-size:9.5px;color:#c0c0cc;font-weight:normal;white-space:nowrap;transform:scaleX(0.9675);transform-origin:center center;">01:00</div><div style="position:absolute;left:-532.77px;top:882.21px;width:1600px;height:19.0px;line-height:19.0px;text-align:center;font-size:9.5px;color:#c0c0cc;font-weight:normal;white-space:nowrap;transform:scaleX(0.9675);transform-origin:center center;">01:30</div><div style="position:absolute;left:-483.44px;top:882.21px;width:1600px;height:19.0px;line-height:19.0px;text-align:center;font-size:9.5px;color:#c0c0cc;font-weight:normal;white-space:nowrap;transform:scaleX(0.9675);transform-origin:center center;">02:00</div><div style="position:absolute;left:-434.11px;top:882.21px;width:1600px;height:19.0px;line-height:19.0px;text-align:center;font-size:9.5px;color:#c0c0cc;font-weight:normal;white-space:nowrap;transform:scaleX(0.9675);transform-origin:center center;">02:30</div><div style="position:absolute;left:-384.78px;top:882.21px;width:1600px;height:19.0px;line-height:19.0px;text-align:center;font-size:9.5px;color:#c0c0cc;font-weight:normal;white-space:nowrap;transform:scaleX(0.9675);transform-origin:center center;">03:00</div><div style="position:absolute;left:-335.45px;top:882.21px;width:1600px;height:19.0px;line-height:19.0px;text-align:center;font-size:9.5px;color:#c0c0cc;font-weight:normal;white-space:nowrap;transform:scaleX(0.9675);transform-origin:center center;">03:30</div><div style="position:absolute;left:-286.12px;top:882.21px;width:1600px;height:19.0px;line-height:19.0px;text-align:center;font-size:9.5px;color:#c0c0cc;font-weight:normal;white-space:nowrap;transform:scaleX(0.9675);transform-origin:center center;">04:00</div><div style="position:absolute;left:-236.80px;top:882.21px;width:1600px;height:19.0px;line-height:19.0px;text-align:center;font-size:9.5px;color:#c0c0cc;font-weight:normal;white-space:nowrap;transform:scaleX(0.9675);transform-origin:center center;">04:30</div><div style="position:absolute;left:-187.47px;top:882.21px;width:1600px;height:19.0px;line-height:19.0px;text-align:center;font-size:9.5px;color:#c0c0cc;font-weight:normal;white-space:nowrap;transform:scaleX(0.9675);transform-origin:center center;">05:00</div><div style="position:absolute;left:-138.14px;top:882.21px;width:1600px;height:19.0px;line-height:19.0px;text-align:center;font-size:9.5px;color:#c0c0cc;font-weight:normal;white-space:nowrap;transform:scaleX(0.9675);transform-origin:center center;">05:30</div><div style="position:absolute;left:-88.81px;top:882.21px;width:1600px;height:19.0px;line-height:19.0px;text-align:center;font-size:9.5px;color:#c0c0cc;font-weight:normal;white-space:nowrap;transform:scaleX(0.9675);transform-origin:center center;">06:00</div><div style="position:absolute;left:-39.48px;top:882.21px;width:1600px;height:19.0px;line-height:19.0px;text-align:center;font-size:9.5px;color:#c0c0cc;font-weight:normal;white-space:nowrap;transform:scaleX(0.9675);transform-origin:center center;">06:30</div><div style="position:absolute;left:9.84px;top:882.21px;width:1600px;height:19.0px;line-height:19.0px;text-align:center;font-size:9.5px;color:#c0c0cc;font-weight:normal;white-space:nowrap;transform:scaleX(0.9675);transform-origin:center center;">07:00</div><div style="position:absolute;left:59.17px;top:882.21px;width:1600px;height:19.0px;line-height:19.0px;text-align:center;font-size:9.5px;color:#c0c0cc;font-weight:normal;white-space:nowrap;transform:scaleX(0.9675);transform-origin:center center;">07:30</div><div style="position:absolute;left:108.50px;top:882.21px;width:1600px;height:19.0px;line-height:19.0px;text-align:center;font-size:9.5px;color:#c0c0cc;font-weight:normal;white-space:nowrap;transform:scaleX(0.9675);transform-origin:center center;">08:00</div><div style="position:absolute;left:157.83px;top:882.21px;width:1600px;height:19.0px;line-height:19.0px;text-align:center;font-size:9.5px;color:#c0c0cc;font-weight:normal;white-space:nowrap;transform:scaleX(0.9675);transform-origin:center center;">08:30</div><div style="position:absolute;left:207.16px;top:882.21px;width:1600px;height:19.0px;line-height:19.0px;text-align:center;font-size:9.5px;color:#c0c0cc;font-weight:normal;white-space:nowrap;transform:scaleX(0.9675);transform-origin:center center;">09:00</div><div style="position:absolute;left:256.48px;top:882.21px;width:1600px;height:19.0px;line-height:19.0px;text-align:center;font-size:9.5px;color:#c0c0cc;font-weight:normal;white-space:nowrap;transform:scaleX(0.9675);transform-origin:center center;">09:30</div><div style="position:absolute;left:305.81px;top:882.21px;width:1600px;height:19.0px;line-height:19.0px;text-align:center;font-size:9.5px;color:#c0c0cc;font-weight:normal;white-space:nowrap;transform:scaleX(0.9675);transform-origin:center center;">10:00</div><div style="position:absolute;left:355.14px;top:882.21px;width:1600px;height:19.0px;line-height:19.0px;text-align:center;font-size:9.5px;color:#c0c0cc;font-weight:normal;white-space:nowrap;transform:scaleX(0.9675);transform-origin:center center;">10:30</div><div style="position:absolute;left:404.47px;top:882.21px;width:1600px;height:19.0px;line-height:19.0px;text-align:center;font-size:9.5px;color:#c0c0cc;font-weight:normal;white-space:nowrap;transform:scaleX(0.9675);transform-origin:center center;">11:00</div><div style="position:absolute;left:453.80px;top:882.21px;width:1600px;height:19.0px;line-height:19.0px;text-align:center;font-size:9.5px;color:#c0c0cc;font-weight:normal;white-space:nowrap;transform:scaleX(0.9675);transform-origin:center center;">11:30</div><div style="position:absolute;left:503.12px;top:882.21px;width:1600px;height:19.0px;line-height:19.0px;text-align:center;font-size:9.5px;color:#c0c0cc;font-weight:normal;white-space:nowrap;transform:scaleX(0.9675);transform-origin:center center;">12:00</div><div style="position:absolute;left:552.45px;top:882.21px;width:1600px;height:19.0px;line-height:19.0px;text-align:center;font-size:9.5px;color:#c0c0cc;font-weight:normal;white-space:nowrap;transform:scaleX(0.9675);transform-origin:center center;">12:30</div><div style="position:absolute;left:601.78px;top:882.21px;width:1600px;height:19.0px;line-height:19.0px;text-align:center;font-size:9.5px;color:#c0c0cc;font-weight:normal;white-space:nowrap;transform:scaleX(0.9675);transform-origin:center center;">13:00</div><div style="position:absolute;left:651.11px;top:882.21px;width:1600px;height:19.0px;line-height:19.0px;text-align:center;font-size:9.5px;color:#c0c0cc;font-weight:normal;white-space:nowrap;transform:scaleX(0.9675);transform-origin:center center;">13:30</div><div style="position:absolute;left:700.44px;top:882.21px;width:1600px;height:19.0px;line-height:19.0px;text-align:center;font-size:9.5px;color:#c0c0cc;font-weight:normal;white-space:nowrap;transform:scaleX(0.9675);transform-origin:center center;">14:00</div><div style="position:absolute;left:749.77px;top:882.21px;width:1600px;height:19.0px;line-height:19.0px;text-align:center;font-size:9.5px;color:#c0c0cc;font-weight:normal;white-space:nowrap;transform:scaleX(0.9675);transform-origin:center center;">14:30</div><div style="position:absolute;left:799.09px;top:882.21px;width:1600px;height:19.0px;line-height:19.0px;text-align:center;font-size:9.5px;color:#c0c0cc;font-weight:normal;white-space:nowrap;transform:scaleX(0.9675);transform-origin:center center;">15:00</div><div style="position:absolute;left:848.42px;top:882.21px;width:1600px;height:19.0px;line-height:19.0px;text-align:center;font-size:9.5px;color:#c0c0cc;font-weight:normal;white-space:nowrap;transform:scaleX(0.9675);transform-origin:center center;">15:30</div><div style="position:absolute;left:897.75px;top:882.21px;width:1600px;height:19.0px;line-height:19.0px;text-align:center;font-size:9.5px;color:#c0c0cc;font-weight:normal;white-space:nowrap;transform:scaleX(0.9675);transform-origin:center center;">16:00</div><div style="position:absolute;left:947.08px;top:882.21px;width:1600px;height:19.0px;line-height:19.0px;text-align:center;font-size:9.5px;color:#c0c0cc;font-weight:normal;white-space:nowrap;transform:scaleX(0.9675);transform-origin:center center;">16:30</div><div style="position:absolute;left:996.41px;top:882.21px;width:1600px;height:19.0px;line-height:19.0px;text-align:center;font-size:9.5px;color:#c0c0cc;font-weight:normal;white-space:nowrap;transform:scaleX(0.9675);transform-origin:center center;">17:00</div><div style="position:absolute;left:1045.73px;top:882.21px;width:1600px;height:19.0px;line-height:19.0px;text-align:center;font-size:9.5px;color:#c0c0cc;font-weight:normal;white-space:nowrap;transform:scaleX(0.9675);transform-origin:center center;">17:30</div><div style="position:absolute;left:1095.06px;top:882.21px;width:1600px;height:19.0px;line-height:19.0px;text-align:center;font-size:9.5px;color:#c0c0cc;font-weight:normal;white-space:nowrap;transform:scaleX(0.9675);transform-origin:center center;">18:00</div><div style="position:absolute;left:1144.39px;top:882.21px;width:1600px;height:19.0px;line-height:19.0px;text-align:center;font-size:9.5px;color:#c0c0cc;font-weight:normal;white-space:nowrap;transform:scaleX(0.9675);transform-origin:center center;">18:30</div><div style="position:absolute;left:1193.72px;top:882.21px;width:1600px;height:19.0px;line-height:19.0px;text-align:center;font-size:9.5px;color:#c0c0cc;font-weight:normal;white-space:nowrap;transform:scaleX(0.9675);transform-origin:center center;">19:00</div><div style="position:absolute;left:1243.05px;top:882.21px;width:1600px;height:19.0px;line-height:19.0px;text-align:center;font-size:9.5px;color:#c0c0cc;font-weight:normal;white-space:nowrap;transform:scaleX(0.9675);transform-origin:center center;">19:30</div><div style="position:absolute;left:1292.38px;top:882.21px;width:1600px;height:19.0px;line-height:19.0px;text-align:center;font-size:9.5px;color:#c0c0cc;font-weight:normal;white-space:nowrap;transform:scaleX(0.9675);transform-origin:center center;">20:00</div><div style="position:absolute;left:1341.70px;top:882.21px;width:1600px;height:19.0px;line-height:19.0px;text-align:center;font-size:9.5px;color:#c0c0cc;font-weight:normal;white-space:nowrap;transform:scaleX(0.9675);transform-origin:center center;">20:30</div><div style="position:absolute;left:1391.03px;top:882.21px;width:1600px;height:19.0px;line-height:19.0px;text-align:center;font-size:9.5px;color:#c0c0cc;font-weight:normal;white-space:nowrap;transform:scaleX(0.9675);transform-origin:center center;">21:00</div><div style="position:absolute;left:1440.36px;top:882.21px;width:1600px;height:19.0px;line-height:19.0px;text-align:center;font-size:9.5px;color:#c0c0cc;font-weight:normal;white-space:nowrap;transform:scaleX(0.9675);transform-origin:center center;">21:30</div><div style="position:absolute;left:1489.69px;top:882.21px;width:1600px;height:19.0px;line-height:19.0px;text-align:center;font-size:9.5px;color:#c0c0cc;font-weight:normal;white-space:nowrap;transform:scaleX(0.9675);transform-origin:center center;">22:00</div><div style="position:absolute;left:1539.02px;top:882.21px;width:1600px;height:19.0px;line-height:19.0px;text-align:center;font-size:9.5px;color:#c0c0cc;font-weight:normal;white-space:nowrap;transform:scaleX(0.9675);transform-origin:center center;">22:30</div><div style="position:absolute;left:1588.34px;top:882.21px;width:1600px;height:19.0px;line-height:19.0px;text-align:center;font-size:9.5px;color:#c0c0cc;font-weight:normal;white-space:nowrap;transform:scaleX(0.9675);transform-origin:center center;">23:00</div><div style="position:absolute;left:1637.67px;top:882.21px;width:1600px;height:19.0px;line-height:19.0px;text-align:center;font-size:9.5px;color:#c0c0cc;font-weight:normal;white-space:nowrap;transform:scaleX(0.9675);transform-origin:center center;">23:30</div><div style="position:absolute;left:-741.10px;top:765.50px;width:1600px;height:19.0px;line-height:19.0px;text-align:center;font-size:9.5px;color:#c0c0cc;font-weight:normal;white-space:nowrap;transform:rotate(-90deg) scaleX(1.0095);transform-origin:center center;transform-origin:center center;">Leistung</div><div style="position:absolute;left:58.75px;top:907.20px;width:11.30px;height:2.60px;background:#73bf69;border-radius:1px;"></div><div style="position:absolute;left:76.50px;top:899.01px;width:1600px;height:19.0px;line-height:19.0px;text-align:left;font-size:9.5px;color:#c0c0cc;font-weight:normal;white-space:nowrap;transform:scaleX(1.0036);transform-origin:left center;">MPPT1</div><div style="position:absolute;left:115.00px;top:907.20px;width:11.30px;height:2.60px;background:#fade2a;border-radius:1px;"></div><div style="position:absolute;left:132.75px;top:899.01px;width:1600px;height:19.0px;line-height:19.0px;text-align:left;font-size:9.5px;color:#c0c0cc;font-weight:normal;white-space:nowrap;transform:scaleX(1.0036);transform-origin:left center;">MPPT2</div>
<div style="position:absolute;left:2506.00px;top:332.50px;width:484.50px;height:83.25px;background:#181b1f;border:1px solid rgba(204,204,220,0.055);box-sizing:border-box;border-radius:2px;"></div>
<div style="position:absolute;left:1948.25px;top:333.14px;width:1600px;height:24.6px;line-height:24.6px;text-align:center;font-size:12.3px;color:#ccccdc;font-weight:normal;white-space:nowrap;transform:scaleX(0.8600);transform-origin:center center;-webkit-text-stroke:0.25px #ccccdc;">Batterie SOC</div>
<div style="position:absolute;left:1948.75px;top:349.45px;width:1600px;height:73.6px;line-height:73.6px;text-align:center;font-size:36.8px;color:#3274d9;font-weight:bold;white-space:nowrap;transform:scaleX(0.9212);transform-origin:center center;">No data</div>
<div style="position:absolute;left:2506.00px;top:422.30px;width:484.50px;height:112.50px;background:#181b1f;border:1px solid rgba(204,204,220,0.055);box-sizing:border-box;border-radius:2px;"></div>
<div style="position:absolute;left:1948.25px;top:422.94px;width:1600px;height:24.6px;line-height:24.6px;text-align:center;font-size:12.3px;color:#ccccdc;font-weight:normal;white-space:nowrap;transform:scaleX(0.8600);transform-origin:center center;-webkit-text-stroke:0.25px #ccccdc;">Steuerung</div>
<div style="position:absolute;left:2513.00px;top:453.00px;width:473.00px;height:75.70px;overflow:hidden;"><div style="position:absolute;left:0;top:1.02px;height:17.35px;line-height:17.35px;white-space:nowrap;font-size:13px;transform:scaleX(0.8534);transform-origin:left center;"><span style="color:#6e9fff">&lt;button style="background: #E03434; color: black; width: 95%; margin: 1px; margin-bottom:</span><span style="color:#ccccdc"></span></div><div style="position:absolute;left:0;top:18.37px;height:17.35px;line-height:17.35px;white-space:nowrap;font-size:13px;transform:scaleX(0.8534);transform-origin:left center;"><span style="color:#6e9fff">5px;"&gt;RPI ausschalten&lt;/button&gt;</span><span style="color:#ccccdc"></span></div><div style="position:absolute;left:0;top:35.72px;height:17.35px;line-height:17.35px;white-space:nowrap;font-size:13px;transform:scaleX(0.8534);transform-origin:left center;"><span style="color:#6e9fff">&lt;button style="background: #FF6600; color: black; width: 95%; margin: 1px; margin-bottom:</span><span style="color:#ccccdc"></span></div><div style="position:absolute;left:0;top:53.07px;height:17.35px;line-height:17.35px;white-space:nowrap;font-size:13px;transform:scaleX(0.8534);transform-origin:left center;"><span style="color:#6e9fff">5px;"&gt;RPI neu starten&lt;/button&gt;</span><span style="color:#ccccdc"> &lt;iframe src="about:blank" name="frame" height="0" width="0"</span></div><div style="position:absolute;left:0;top:70.42px;height:17.35px;line-height:17.35px;white-space:nowrap;font-size:13px;transform:scaleX(0.8534);transform-origin:left center;"><span style="color:#6e9fff">frameborder="0" scrolling="no"&gt;</span><span style="color:#ccccdc"></span></div></div>
<div style="position:absolute;left:2506.00px;top:541.00px;width:484.50px;height:83.50px;background:#181b1f;border:1px solid rgba(204,204,220,0.055);box-sizing:border-box;border-radius:2px;"></div>
<div style="position:absolute;left:1948.25px;top:541.64px;width:1600px;height:24.6px;line-height:24.6px;text-align:center;font-size:12.3px;color:#ccccdc;font-weight:normal;white-space:nowrap;transform:scaleX(0.8600);transform-origin:center center;-webkit-text-stroke:0.25px #ccccdc;">Temperatur</div>
<div style="position:absolute;left:2698.85px;top:558.65px;width:1600px;height:73.0px;line-height:73.0px;text-align:left;font-size:36.5px;color:#73bf69;font-weight:bold;white-space:nowrap;transform:scaleX(0.9918);transform-origin:left center;">33.4</div>
<div style="position:absolute;left:2777.60px;top:577.50px;width:1600px;height:45.0px;line-height:45.0px;text-align:left;font-size:22.5px;color:#73bf69;font-weight:bold;white-space:nowrap;transform:scaleX(0.8394);transform-origin:left center;">&deg;C</div>
<div style="position:absolute;left:2506.00px;top:631.25px;width:484.50px;height:81.75px;background:#181b1f;border:1px solid rgba(204,204,220,0.055);box-sizing:border-box;border-radius:2px;"></div>
<div style="position:absolute;left:1948.25px;top:631.89px;width:1600px;height:24.6px;line-height:24.6px;text-align:center;font-size:12.3px;color:#ccccdc;font-weight:normal;white-space:nowrap;transform:scaleX(0.8600);transform-origin:center center;-webkit-text-stroke:0.25px #ccccdc;">Wirkungsgrad</div>
<div style="position:absolute;left:2696.00px;top:647.95px;width:1600px;height:73.6px;line-height:73.6px;text-align:left;font-size:36.8px;color:#73bf69;font-weight:bold;white-space:nowrap;transform:scaleX(0.9664);transform-origin:left center;">100.0</div>
<div style="position:absolute;left:2788.30px;top:671.04px;width:1600px;height:39.0px;line-height:39.0px;text-align:left;font-size:19.5px;color:#73bf69;font-weight:bold;white-space:nowrap;transform:scaleX(0.8297);transform-origin:left center;">%</div>
<div style="position:absolute;left:2506.00px;top:720.50px;width:484.50px;height:112.00px;background:#181b1f;border:1px solid rgba(204,204,220,0.055);box-sizing:border-box;border-radius:2px;"></div>
<div style="position:absolute;left:1948.25px;top:721.14px;width:1600px;height:24.6px;line-height:24.6px;text-align:center;font-size:12.3px;color:#ccccdc;font-weight:normal;white-space:nowrap;transform:scaleX(0.8600);transform-origin:center center;-webkit-text-stroke:0.25px #ccccdc;">Laufzeit</div>
<div style="position:absolute;left:2506.00px;top:746.00px;width:242.00px;height:27.85px;background:linear-gradient(120deg,#3d8537,#56a64b);"></div>
<div style="position:absolute;left:2748.00px;top:746.00px;width:241.50px;height:27.85px;background:#37872d;"></div>
<div style="position:absolute;left:2511.50px;top:747.74px;width:1600px;height:24.6px;line-height:24.6px;text-align:left;font-size:12.3px;color:#ffffff;font-weight:normal;white-space:nowrap;transform:scaleX(0.8950);transform-origin:left center;">Heute Minuten</div>
<div style="position:absolute;left:2753.50px;top:747.74px;width:1600px;height:24.6px;line-height:24.6px;text-align:left;font-size:12.3px;color:#ffffff;font-weight:normal;white-space:nowrap;transform:scaleX(0.8950);transform-origin:left center;">669</div>
<div style="position:absolute;left:2506.00px;top:773.85px;width:242.00px;height:27.85px;background:linear-gradient(120deg,#3d8537,#56a64b);"></div>
<div style="position:absolute;left:2748.00px;top:773.85px;width:241.50px;height:27.85px;background:#37872d;"></div>
<div style="position:absolute;left:2511.50px;top:775.59px;width:1600px;height:24.6px;line-height:24.6px;text-align:left;font-size:12.3px;color:#ffffff;font-weight:normal;white-space:nowrap;transform:scaleX(0.8950);transform-origin:left center;">Gesamt Stunden</div>
<div style="position:absolute;left:2753.50px;top:775.59px;width:1600px;height:24.6px;line-height:24.6px;text-align:left;font-size:12.3px;color:#ffffff;font-weight:normal;white-space:nowrap;transform:scaleX(0.8950);transform-origin:left center;">342</div>
<div style="position:absolute;left:2506.00px;top:773.35px;width:483.50px;height:1.00px;background:rgba(0,0,0,0.35);"></div>
<div style="position:absolute;left:2747.50px;top:746.00px;width:1.00px;height:55.70px;background:rgba(0,0,0,0.35);"></div>
<div style="position:absolute;left:49.00px;top:929.00px;width:976.00px;height:142.50px;background:#181b1f;border:1px solid rgba(204,204,220,0.055);box-sizing:border-box;border-radius:2px;"></div>
<div style="position:absolute;left:-263.00px;top:929.64px;width:1600px;height:24.6px;line-height:24.6px;text-align:center;font-size:12.3px;color:#ccccdc;font-weight:normal;white-space:nowrap;transform:scaleX(0.8600);transform-origin:center center;-webkit-text-stroke:0.25px #ccccdc;">Erzeugte PV Leistung</div>
<div style="position:absolute;left:49.00px;top:954.75px;width:487.25px;height:27.95px;background:#37872d;"></div>
<div style="position:absolute;left:536.25px;top:954.75px;width:487.75px;height:27.95px;background:linear-gradient(120deg,#3d8537,#56a64b);"></div>
<div style="position:absolute;left:54.25px;top:956.39px;width:1600px;height:24.6px;line-height:24.6px;text-align:left;font-size:12.3px;color:#ffffff;font-weight:normal;white-space:nowrap;transform:scaleX(0.8839);transform-origin:left center;">Heute</div>
<div style="position:absolute;left:541.70px;top:956.39px;width:1600px;height:24.6px;line-height:24.6px;text-align:left;font-size:12.3px;color:#ffffff;font-weight:normal;white-space:nowrap;transform:scaleX(0.8804);transform-origin:left center;">36.4 kWh</div>
<div style="position:absolute;left:49.00px;top:982.70px;width:487.25px;height:27.95px;background:#37872d;"></div>
<div style="position:absolute;left:536.25px;top:982.70px;width:487.75px;height:27.95px;background:linear-gradient(120deg,#3d8537,#56a64b);"></div>
<div style="position:absolute;left:54.25px;top:984.34px;width:1600px;height:24.6px;line-height:24.6px;text-align:left;font-size:12.3px;color:#ffffff;font-weight:normal;white-space:nowrap;transform:scaleX(0.8950);transform-origin:left center;">Monat</div>
<div style="position:absolute;left:541.70px;top:984.34px;width:1600px;height:24.6px;line-height:24.6px;text-align:left;font-size:12.3px;color:#ffffff;font-weight:normal;white-space:nowrap;transform:scaleX(0.8950);transform-origin:left center;">772.6 kWh</div>
<div style="position:absolute;left:49.00px;top:1010.65px;width:487.25px;height:27.95px;background:#37872d;"></div>
<div style="position:absolute;left:536.25px;top:1010.65px;width:487.75px;height:27.95px;background:linear-gradient(120deg,#3d8537,#56a64b);"></div>
<div style="position:absolute;left:54.25px;top:1012.29px;width:1600px;height:24.6px;line-height:24.6px;text-align:left;font-size:12.3px;color:#ffffff;font-weight:normal;white-space:nowrap;transform:scaleX(0.8950);transform-origin:left center;">Gesamt</div>
<div style="position:absolute;left:541.70px;top:1012.29px;width:1600px;height:24.6px;line-height:24.6px;text-align:left;font-size:12.3px;color:#ffffff;font-weight:normal;white-space:nowrap;transform:scaleX(0.8950);transform-origin:left center;">1.0 MWh</div>
<div style="position:absolute;left:49.00px;top:981.75px;width:975.00px;height:1.00px;background:rgba(0,0,0,0.45);"></div>
<div style="position:absolute;left:49.00px;top:1009.75px;width:975.00px;height:1.00px;background:rgba(0,0,0,0.45);"></div>
<div style="position:absolute;left:535.75px;top:954.75px;width:1.00px;height:83.85px;background:rgba(0,0,0,0.45);"></div>
<div style="position:absolute;left:1031.00px;top:929.00px;width:1959.50px;height:142.50px;background:#181b1f;border:1px solid rgba(204,204,220,0.055);box-sizing:border-box;border-radius:2px;"></div>
<div style="position:absolute;left:1210.50px;top:929.64px;width:1600px;height:24.6px;line-height:24.6px;text-align:center;font-size:12.3px;color:#ccccdc;font-weight:normal;white-space:nowrap;transform:scaleX(0.8600);transform-origin:center center;-webkit-text-stroke:0.25px #ccccdc;">Tagesleistung</div>
<svg style="left:2913.6px;top:937.6px" width="11" height="11" viewBox="0 0 11 11"><circle cx="5.5" cy="5.5" r="4.4" fill="none" stroke="#5aa8e8" stroke-width="1.1"/><path d="M5.5 2.8 V5.8 L4.3 6.8" fill="none" stroke="#5aa8e8" stroke-width="1.1"/></svg>
<div style="position:absolute;left:1383.20px;top:932.67px;width:1600px;height:19.8px;line-height:19.8px;text-align:right;font-size:9.9px;color:#5aa8e8;font-weight:bold;white-space:nowrap;transform:scaleX(0.9037);transform-origin:right center;">Last 4 weeks</div>
<svg style="left:0;top:0" width="3000" height="1183" viewBox="0 0 3000 1183"><g stroke="rgba(204,204,220,0.16)" stroke-width="1" shape-rendering="crispEdges"><line x1="1085.75" y1="1041.30" x2="2970" y2="1041.30"/><line x1="1085.75" y1="1023.30" x2="2970" y2="1023.30"/><line x1="1085.75" y1="1005.30" x2="2970" y2="1005.30"/><line x1="1085.75" y1="987.30" x2="2970" y2="987.30"/><line x1="1085.75" y1="969.30" x2="2970" y2="969.30"/><line x1="1103.60" y1="969" x2="1103.60" y2="1041.3"/><line x1="1170.93" y1="969" x2="1170.93" y2="1041.3"/><line x1="1238.26" y1="969" x2="1238.26" y2="1041.3"/><line x1="1305.59" y1="969" x2="1305.59" y2="1041.3"/><line x1="1372.92" y1="969" x2="1372.92" y2="1041.3"/><line x1="1440.25" y1="969" x2="1440.25" y2="1041.3"/><line x1="1507.58" y1="969" x2="1507.58" y2="1041.3"/><line x1="1574.91" y1="969" x2="1574.91" y2="1041.3"/><line x1="1642.24" y1="969" x2="1642.24" y2="1041.3"/><line x1="1709.57" y1="969" x2="1709.57" y2="1041.3"/><line x1="1776.90" y1="969" x2="1776.90" y2="1041.3"/><line x1="1844.23" y1="969" x2="1844.23" y2="1041.3"/><line x1="1911.56" y1="969" x2="1911.56" y2="1041.3"/><line x1="1978.89" y1="969" x2="1978.89" y2="1041.3"/><line x1="2046.21" y1="969" x2="2046.21" y2="1041.3"/><line x1="2113.54" y1="969" x2="2113.54" y2="1041.3"/><line x1="2180.87" y1="969" x2="2180.87" y2="1041.3"/><line x1="2248.20" y1="969" x2="2248.20" y2="1041.3"/><line x1="2315.53" y1="969" x2="2315.53" y2="1041.3"/><line x1="2382.86" y1="969" x2="2382.86" y2="1041.3"/><line x1="2450.19" y1="969" x2="2450.19" y2="1041.3"/><line x1="2517.52" y1="969" x2="2517.52" y2="1041.3"/><line x1="2584.85" y1="969" x2="2584.85" y2="1041.3"/><line x1="2652.18" y1="969" x2="2652.18" y2="1041.3"/><line x1="2719.51" y1="969" x2="2719.51" y2="1041.3"/><line x1="2786.84" y1="969" x2="2786.84" y2="1041.3"/><line x1="2854.17" y1="969" x2="2854.17" y2="1041.3"/><line x1="2921.50" y1="969" x2="2921.50" y2="1041.3"/></g><rect x="2923.5" y="975" width="45" height="66.3" fill="#7eb26d"/></svg>
<div style="position:absolute;left:-518.80px;top:1032.82px;width:1600px;height:16.6px;line-height:16.6px;text-align:right;font-size:8.3px;color:#c0c0cc;font-weight:normal;white-space:nowrap;transform:scaleX(1.0881);transform-origin:right center;">0 Wh</div>
<div style="position:absolute;left:-518.80px;top:1014.82px;width:1600px;height:16.6px;line-height:16.6px;text-align:right;font-size:8.3px;color:#c0c0cc;font-weight:normal;white-space:nowrap;transform:scaleX(1.0881);transform-origin:right center;">10 Wh</div>
<div style="position:absolute;left:-518.80px;top:996.82px;width:1600px;height:16.6px;line-height:16.6px;text-align:right;font-size:8.3px;color:#c0c0cc;font-weight:normal;white-space:nowrap;transform:scaleX(1.0881);transform-origin:right center;">20 Wh</div>
<div style="position:absolute;left:-518.80px;top:978.82px;width:1600px;height:16.6px;line-height:16.6px;text-align:right;font-size:8.3px;color:#c0c0cc;font-weight:normal;white-space:nowrap;transform:scaleX(1.0881);transform-origin:right center;">30 Wh</div>
<div style="position:absolute;left:-518.80px;top:960.82px;width:1600px;height:16.6px;line-height:16.6px;text-align:right;font-size:8.3px;color:#c0c0cc;font-weight:normal;white-space:nowrap;transform:scaleX(1.0881);transform-origin:right center;">40 Wh</div>
<div style="position:absolute;left:303.60px;top:1045.02px;width:1600px;height:16.6px;line-height:16.6px;text-align:center;font-size:8.3px;color:#c0c0cc;font-weight:normal;white-space:nowrap;transform:scaleX(1.1458);transform-origin:center center;">02/24</div>
<div style="position:absolute;left:370.93px;top:1045.02px;width:1600px;height:16.6px;line-height:16.6px;text-align:center;font-size:8.3px;color:#c0c0cc;font-weight:normal;white-space:nowrap;transform:scaleX(1.1458);transform-origin:center center;">02/25</div>
<div style="position:absolute;left:438.26px;top:1045.02px;width:1600px;height:16.6px;line-height:16.6px;text-align:center;font-size:8.3px;color:#c0c0cc;font-weight:normal;white-space:nowrap;transform:scaleX(1.1458);transform-origin:center center;">02/26</div>
<div style="position:absolute;left:505.59px;top:1045.02px;width:1600px;height:16.6px;line-height:16.6px;text-align:center;font-size:8.3px;color:#c0c0cc;font-weight:normal;white-space:nowrap;transform:scaleX(1.1458);transform-origin:center center;">02/27</div>
<div style="position:absolute;left:572.92px;top:1045.02px;width:1600px;height:16.6px;line-height:16.6px;text-align:center;font-size:8.3px;color:#c0c0cc;font-weight:normal;white-space:nowrap;transform:scaleX(1.1458);transform-origin:center center;">02/28</div>
<div style="position:absolute;left:640.25px;top:1045.02px;width:1600px;height:16.6px;line-height:16.6px;text-align:center;font-size:8.3px;color:#c0c0cc;font-weight:normal;white-space:nowrap;transform:scaleX(1.1458);transform-origin:center center;">03/01</div>
<div style="position:absolute;left:707.58px;top:1045.02px;width:1600px;height:16.6px;line-height:16.6px;text-align:center;font-size:8.3px;color:#c0c0cc;font-weight:normal;white-space:nowrap;transform:scaleX(1.1458);transform-origin:center center;">03/02</div>
<div style="position:absolute;left:774.91px;top:1045.02px;width:1600px;height:16.6px;line-height:16.6px;text-align:center;font-size:8.3px;color:#c0c0cc;font-weight:normal;white-space:nowrap;transform:scaleX(1.1458);transform-origin:center center;">03/03</div>
<div style="position:absolute;left:842.24px;top:1045.02px;width:1600px;height:16.6px;line-height:16.6px;text-align:center;font-size:8.3px;color:#c0c0cc;font-weight:normal;white-space:nowrap;transform:scaleX(1.1458);transform-origin:center center;">03/04</div>
<div style="position:absolute;left:909.57px;top:1045.02px;width:1600px;height:16.6px;line-height:16.6px;text-align:center;font-size:8.3px;color:#c0c0cc;font-weight:normal;white-space:nowrap;transform:scaleX(1.1458);transform-origin:center center;">03/05</div>
<div style="position:absolute;left:976.90px;top:1045.02px;width:1600px;height:16.6px;line-height:16.6px;text-align:center;font-size:8.3px;color:#c0c0cc;font-weight:normal;white-space:nowrap;transform:scaleX(1.1458);transform-origin:center center;">03/06</div>
<div style="position:absolute;left:1044.23px;top:1045.02px;width:1600px;height:16.6px;line-height:16.6px;text-align:center;font-size:8.3px;color:#c0c0cc;font-weight:normal;white-space:nowrap;transform:scaleX(1.1458);transform-origin:center center;">03/07</div>
<div style="position:absolute;left:1111.56px;top:1045.02px;width:1600px;height:16.6px;line-height:16.6px;text-align:center;font-size:8.3px;color:#c0c0cc;font-weight:normal;white-space:nowrap;transform:scaleX(1.1458);transform-origin:center center;">03/08</div>
<div style="position:absolute;left:1178.89px;top:1045.02px;width:1600px;height:16.6px;line-height:16.6px;text-align:center;font-size:8.3px;color:#c0c0cc;font-weight:normal;white-space:nowrap;transform:scaleX(1.1458);transform-origin:center center;">03/09</div>
<div style="position:absolute;left:1246.21px;top:1045.02px;width:1600px;height:16.6px;line-height:16.6px;text-align:center;font-size:8.3px;color:#c0c0cc;font-weight:normal;white-space:nowrap;transform:scaleX(1.1458);transform-origin:center center;">03/10</div>
<div style="position:absolute;left:1313.54px;top:1045.02px;width:1600px;height:16.6px;line-height:16.6px;text-align:center;font-size:8.3px;color:#c0c0cc;font-weight:normal;white-space:nowrap;transform:scaleX(1.1458);transform-origin:center center;">03/11</div>
<div style="position:absolute;left:1380.87px;top:1045.02px;width:1600px;height:16.6px;line-height:16.6px;text-align:center;font-size:8.3px;color:#c0c0cc;font-weight:normal;white-space:nowrap;transform:scaleX(1.1458);transform-origin:center center;">03/12</div>
<div style="position:absolute;left:1448.20px;top:1045.02px;width:1600px;height:16.6px;line-height:16.6px;text-align:center;font-size:8.3px;color:#c0c0cc;font-weight:normal;white-space:nowrap;transform:scaleX(1.1458);transform-origin:center center;">03/13</div>
<div style="position:absolute;left:1515.53px;top:1045.02px;width:1600px;height:16.6px;line-height:16.6px;text-align:center;font-size:8.3px;color:#c0c0cc;font-weight:normal;white-space:nowrap;transform:scaleX(1.1458);transform-origin:center center;">03/14</div>
<div style="position:absolute;left:1582.86px;top:1045.02px;width:1600px;height:16.6px;line-height:16.6px;text-align:center;font-size:8.3px;color:#c0c0cc;font-weight:normal;white-space:nowrap;transform:scaleX(1.1458);transform-origin:center center;">03/15</div>
<div style="position:absolute;left:1650.19px;top:1045.02px;width:1600px;height:16.6px;line-height:16.6px;text-align:center;font-size:8.3px;color:#c0c0cc;font-weight:normal;white-space:nowrap;transform:scaleX(1.1458);transform-origin:center center;">03/16</div>
<div style="position:absolute;left:1717.52px;top:1045.02px;width:1600px;height:16.6px;line-height:16.6px;text-align:center;font-size:8.3px;color:#c0c0cc;font-weight:normal;white-space:nowrap;transform:scaleX(1.1458);transform-origin:center center;">03/17</div>
<div style="position:absolute;left:1784.85px;top:1045.02px;width:1600px;height:16.6px;line-height:16.6px;text-align:center;font-size:8.3px;color:#c0c0cc;font-weight:normal;white-space:nowrap;transform:scaleX(1.1458);transform-origin:center center;">03/18</div>
<div style="position:absolute;left:1852.18px;top:1045.02px;width:1600px;height:16.6px;line-height:16.6px;text-align:center;font-size:8.3px;color:#c0c0cc;font-weight:normal;white-space:nowrap;transform:scaleX(1.1458);transform-origin:center center;">03/19</div>
<div style="position:absolute;left:1919.51px;top:1045.02px;width:1600px;height:16.6px;line-height:16.6px;text-align:center;font-size:8.3px;color:#c0c0cc;font-weight:normal;white-space:nowrap;transform:scaleX(1.1458);transform-origin:center center;">03/20</div>
<div style="position:absolute;left:1986.84px;top:1045.02px;width:1600px;height:16.6px;line-height:16.6px;text-align:center;font-size:8.3px;color:#c0c0cc;font-weight:normal;white-space:nowrap;transform:scaleX(1.1458);transform-origin:center center;">03/21</div>
<div style="position:absolute;left:2054.17px;top:1045.02px;width:1600px;height:16.6px;line-height:16.6px;text-align:center;font-size:8.3px;color:#c0c0cc;font-weight:normal;white-space:nowrap;transform:scaleX(1.1458);transform-origin:center center;">03/22</div>
<div style="position:absolute;left:2121.50px;top:1045.02px;width:1600px;height:16.6px;line-height:16.6px;text-align:center;font-size:8.3px;color:#c0c0cc;font-weight:normal;white-space:nowrap;transform:scaleX(1.1458);transform-origin:center center;">03/23</div>
<div style="position:absolute;left:246.75px;top:1002.05px;width:1600px;height:16.6px;line-height:16.6px;text-align:center;font-size:8.3px;color:#c0c0cc;font-weight:normal;white-space:nowrap;transform:rotate(-90deg) scaleX(1.1440);transform-origin:center center;transform-origin:center center;">pro Tag</div></body></html>
